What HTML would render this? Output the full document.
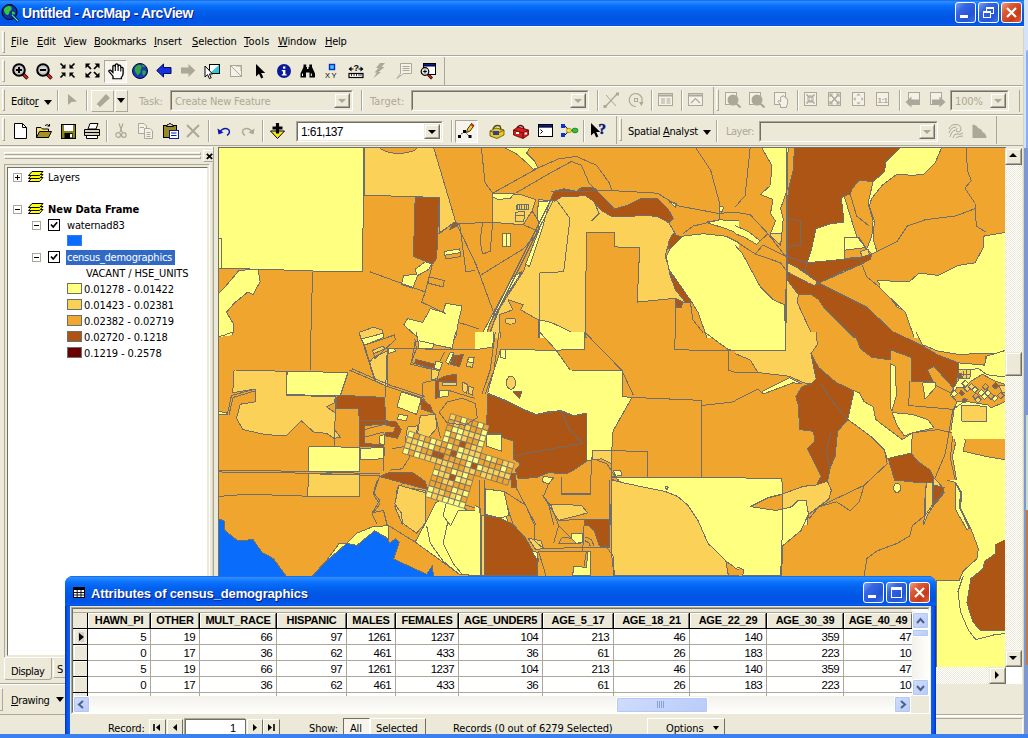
<!DOCTYPE html>
<html><head><meta charset="utf-8"><title>Untitled - ArcMap - ArcView</title>
<style>
*{box-sizing:border-box;margin:0;padding:0}
html,body{width:1028px;height:738px;overflow:hidden;background:#ece9d8;font-family:"DejaVu Sans Condensed","Liberation Sans",sans-serif;font-size:11px;color:#000}
body{position:relative}
.abs,.a{position:absolute}
svg{position:absolute;overflow:visible}
#title{left:0;top:0;width:1024px;height:26px;background:linear-gradient(#0a5fe8 0,#2f8cff 5%,#1c82ff 12%,#0a6ffc 22%,#0262ee 40%,#0058e6 60%,#0054e3 78%,#0055eb 90%,#0560f0 96%,#0348c8 100%)}
.tt{color:#fff;font-family:"Liberation Sans",sans-serif;font-weight:bold;font-size:13px;text-shadow:1px 1px 0 #0a1883;white-space:nowrap}
.wb{position:absolute;width:21px;height:21px;border:1px solid #fff;border-radius:3px;background:linear-gradient(135deg,#7ea0f4 0,#3566e4 30%,#2454d8 70%,#3a6fe8 100%)}
.wb.x{background:linear-gradient(135deg,#f0a088 0,#dc5a36 30%,#c83a18 70%,#e0603c 100%)}
.m{position:absolute;white-space:nowrap;font-size:11px;letter-spacing:-.15px}
.hl{position:absolute;height:1px}
.vl{position:absolute;width:1px}
.sep{position:absolute;width:2px;border-left:1px solid #aca899;border-right:1px solid #fff}
.grip{position:absolute;width:3px;border-left:1px solid #fff;border-top:1px solid #fff;border-right:1px solid #aca899;border-bottom:1px solid #aca899}
.combo{position:absolute;border:1px solid #aca899;border-right-color:#fff;border-bottom-color:#fff}
.combo:before{content:"";position:absolute;left:0;top:0;right:0;bottom:0;border:1px solid #716f64;border-right-color:#ece9d8;border-bottom-color:#ece9d8}
.dd{position:absolute;right:2px;top:2px;width:16px;bottom:2px;background:#ece9d8;border:1px solid #ece9d8;border-right-color:#716f64;border-bottom-color:#716f64}
.dd:before{content:"";position:absolute;left:0;top:0;right:0;bottom:0;border:1px solid #fff;border-right-color:#aca899;border-bottom-color:#aca899}
.dd:after{content:"";position:absolute;left:3px;top:5px;border:4px solid transparent;border-top-color:#000;border-bottom:0}
.dd.g:after{border-top-color:#aca899}
.dis{color:#aca899}
.tri{position:absolute;width:0;height:0;border:4.5px solid transparent;border-top:5px solid #000;border-bottom:0}
.sunk{position:absolute;border:1px solid #aca899;border-right-color:#fff;border-bottom-color:#fff}
</style></head><body>
<div id="title" class="a">
<svg style="left:1px;top:3px" width="20" height="20" viewBox="0 0 20 20" ><circle cx="8.5" cy="9" r="7.5" fill="#1030a0" stroke="#000"/><path d="M3 6 Q6 1.5 10 3.5 Q12 6.5 8.5 8.5 Q8 13 5 11.5 Q2.5 9 3 6Z" fill="#30c83c"/><path d="M11 8.5 Q14 8 14 10.5 Q12.5 13.5 11 12Z" fill="#30c83c"/><path d="M11 12 L17 18" stroke="#000" stroke-width="2.6"/><path d="M11 12 L17 18" stroke="#40e0f8" stroke-width="1.3"/></svg>
<div class="a tt" style="left:22px;top:5px;font-size:14px;letter-spacing:-.42px">Untitled - ArcMap - ArcView</div>
<div class="wb" style="left:955px;top:2px"><div class="a" style="left:4px;top:12px;width:8px;height:3px;background:#fff"></div></div>
<div class="wb" style="left:978px;top:2px"><div class="a" style="left:7px;top:4px;width:8px;height:7px;border:1px solid #fff;border-top-width:2px"></div><div class="a" style="left:4px;top:8px;width:8px;height:7px;border:1px solid #fff;border-top-width:2px;background:#2c5ce0"></div></div>
<div class="wb x" style="left:1001px;top:2px"><svg style="left:0;top:0" width="19" height="19" viewBox="0 0 19 19"><path d="M5 5 L14 14 M14 5 L5 14" stroke="#fff" stroke-width="2.2"/></svg></div>
</div>
<div class="hl" style="left:0;top:26px;width:1024px;background:#fff"></div>
<div class="grip" style="left:2px;top:31px;height:22px"></div>
<div class="m" style="left:11px;top:35px;letter-spacing:0.3px"><u>F</u>ile</div>
<div class="m" style="left:37px;top:35px;letter-spacing:-0.1px"><u>E</u>dit</div>
<div class="m" style="left:64px;top:35px;letter-spacing:-0.24px"><u>V</u>iew</div>
<div class="m" style="left:94px;top:35px;letter-spacing:-0.37px"><u>B</u>ookmarks</div>
<div class="m" style="left:154px;top:35px;letter-spacing:-0.1px"><u>I</u>nsert</div>
<div class="m" style="left:192px;top:35px;letter-spacing:-0.1px"><u>S</u>election</div>
<div class="m" style="left:244px;top:35px;letter-spacing:0.3px"><u>T</u>ools</div>
<div class="m" style="left:278px;top:35px;letter-spacing:-0.1px"><u>W</u>indow</div>
<div class="m" style="left:325px;top:35px;letter-spacing:-0.25px"><u>H</u>elp</div>
<div class="hl" style="left:0;top:55px;width:1028px;background:#aca899"></div>
<div class="hl" style="left:0;top:56px;width:1028px;background:#fff"></div>
<div class="vl" style="left:1024px;top:57px;height:90px;background:#aca899"></div>
<div class="grip" style="left:2px;top:60px;height:22px"></div>
<div class="hl" style="left:0;top:85px;width:444px;background:#aca899"></div>
<div class="vl" style="left:444px;top:57px;height:29px;background:#aca899"></div>
<div class="hl" style="left:445px;top:85px;width:579px;background:#aca899"></div>
<div class="hl" style="left:0;top:86px;width:1024px;background:#fff"></div>
<svg style="left:12px;top:63px" width="16" height="16" viewBox="0 0 16 16" ><circle cx="7" cy="7" r="5.8" fill="#c0c0c0" stroke="#000" stroke-width="2"/><circle cx="7" cy="7" r="3.2" fill="#d8d8d8"/><path d="M4 7 H10" stroke="#000" stroke-width="2"/><path d="M7 4 V10" stroke="#000" stroke-width="2"/><path d="M11 11 L15.5 15.5" stroke="#000" stroke-width="3.4"/><path d="M11.8 11.8 L15.6 15.6" stroke="#e02020" stroke-width="2"/></svg>
<svg style="left:36px;top:63px" width="16" height="16" viewBox="0 0 16 16" ><circle cx="7" cy="7" r="5.8" fill="#c0c0c0" stroke="#000" stroke-width="2"/><circle cx="7" cy="7" r="3.2" fill="#d8d8d8"/><path d="M4 7 H10" stroke="#000" stroke-width="2"/><path d="M11 11 L15.5 15.5" stroke="#000" stroke-width="3.4"/><path d="M11.8 11.8 L15.6 15.6" stroke="#e02020" stroke-width="2"/></svg>
<svg style="left:60px;top:63px" width="15" height="15" viewBox="0 0 15 15" ><path d="M4.5 4.5 L0.5 0.5" stroke="#000" stroke-width="1.7"/><path d="M5.5 5.5 L1.0 5.5 L5.5 1.0 Z" fill="#000"/><path d="M10.5 4.5 L14.5 0.5" stroke="#000" stroke-width="1.7"/><path d="M9.5 5.5 L14.0 5.5 L9.5 1.0 Z" fill="#000"/><path d="M4.5 10.5 L0.5 14.5" stroke="#000" stroke-width="1.7"/><path d="M5.5 9.5 L1.0 9.5 L5.5 14.0 Z" fill="#000"/><path d="M10.5 10.5 L14.5 14.5" stroke="#000" stroke-width="1.7"/><path d="M9.5 9.5 L14.0 9.5 L9.5 14.0 Z" fill="#000"/></svg>
<svg style="left:85px;top:63px" width="15" height="15" viewBox="0 0 15 15" ><path d="M1.5 1.5 L6.0 6.0" stroke="#000" stroke-width="1.7"/><path d="M0.5 0.5 L5.5 0.5 L0.5 5.5 Z" fill="#000"/><path d="M13.5 1.5 L9.0 6.0" stroke="#000" stroke-width="1.7"/><path d="M14.5 0.5 L9.5 0.5 L14.5 5.5 Z" fill="#000"/><path d="M1.5 13.5 L6.0 9.0" stroke="#000" stroke-width="1.7"/><path d="M0.5 14.5 L5.5 14.5 L0.5 9.5 Z" fill="#000"/><path d="M13.5 13.5 L9.0 9.0" stroke="#000" stroke-width="1.7"/><path d="M14.5 14.5 L9.5 14.5 L14.5 9.5 Z" fill="#000"/></svg>
<div class="a" style="left:104px;top:60px;width:23px;height:23px;border:1px solid #aca899;border-right-color:#fff;border-bottom-color:#fff;background:#f6f4ec"></div>
<svg style="left:108px;top:63px" width="16" height="16" viewBox="0 0 16 16" ><g transform="translate(-0.5,0) scale(1.22,1.05)"><path d="M4.5 15 L4.5 12.5 L1.2 8.2 Q0.8 6.6 2.4 6.8 L4.4 9 L4.4 3 Q5.3 1.6 6.3 3 L6.5 1.6 Q7.6 0.2 8.6 1.6 L8.8 2.6 Q9.9 1.4 10.8 2.8 L11 4.4 Q12.2 3.6 12.8 5 L12.8 10 Q12.6 12.5 11.4 13.5 L11.4 15 Z" fill="#fff" stroke="#000" stroke-width="1.1"/><path d="M6.4 3 V7.5 M8.7 2.6 V7.5 M10.9 4.4 V8" stroke="#000" stroke-width=".9"/></g></svg>
<svg style="left:132px;top:63px" width="16" height="16" viewBox="0 0 16 16" ><circle cx="8" cy="8" r="7.5" fill="#1838b8" stroke="#000830" stroke-width="1"/><path d="M3 4.5 Q5.5 1 8.5 2 Q11 4.5 8.5 6.5 Q9.5 9 7 11 Q5.5 13.5 4.5 10.5 Q2 8 3 4.5Z" fill="#2ea83a"/><path d="M10.5 7.5 Q13.5 6.5 14 9 Q13 12.5 11 12.5 Q9.8 10 10.5 7.5Z" fill="#2ea83a"/><path d="M9.5 1.5 Q12 1.5 13 3.5 Q11.5 4.5 10.5 3.5Z" fill="#2ea83a"/></svg>
<svg style="left:156px;top:63px" width="16" height="16" viewBox="0 0 16 16" ><path d="M0.7 7.5 L7.5 1 L7.5 4.5 L15 4.5 L15 10.5 L7.5 10.5 L7.5 14 Z" fill="#1430e0" stroke="#000860" stroke-width="1"/></svg>
<svg style="left:180px;top:63px" width="16" height="16" viewBox="0 0 16 16" ><path d="M15.3 7.5 L8.5 1 L8.5 4.5 L1 4.5 L1 10.5 L8.5 10.5 L8.5 14 Z" fill="#aca899"/></svg>
<svg style="left:204px;top:63px" width="17" height="17" viewBox="0 0 17 17" ><rect x="5.5" y="1.5" width="10" height="9" fill="#fff" stroke="#000"/><path d="M6 10 L15 2 L15 10Z" fill="#30c8d8"/><path d="M1 3 L1 14 L3.6 11.6 L5.4 15.6 L7.2 14.8 L5.4 11 L8.6 11 Z" fill="#fff" stroke="#000" stroke-width="1"/></svg>
<svg style="left:230px;top:65px" width="12" height="12" viewBox="0 0 12 12" ><rect x="0.5" y="0.5" width="11" height="11" fill="#f4f2e8" stroke="#aca899"/><path d="M1 1 L11 11 M6 1 L11 1 L11 6" stroke="#aca899" fill="none"/></svg>
<svg style="left:255px;top:64px" width="11" height="15" viewBox="0 0 11 15" ><path d="M1 0 L1 12.5 L4 9.8 L6.2 14.6 L8.3 13.6 L6.2 9 L10.2 9 Z" fill="#000"/></svg>
<svg style="left:277px;top:64px" width="14" height="14" viewBox="0 0 14 14" ><circle cx="7" cy="7" r="7" fill="#0a1a9a"/><rect x="6" y="2.5" width="2.4" height="2.2" fill="#fff"/><path d="M4.8 6 H8.4 V10.3 H9.6 V11.6 H4.8 V10.3 H6 V7.3 H4.8Z" fill="#fff"/></svg>
<svg style="left:300px;top:64px" width="16" height="14" viewBox="0 0 16 14" ><path d="M3.5 0.5 H6.2 V3 H7 V5 H8.5 V3 H9.3 V0.5 H12 L12 3 L15 9.5 V13.5 H9.5 V8.5 H6 V13.5 H0.5 V9.5 L3.5 3 Z" fill="#000"/><path d="M2.5 9.5 V12 M11.3 9.5 V12" stroke="#fff" stroke-width="1"/></svg>
<svg style="left:325px;top:62px" width="16" height="16" viewBox="0 0 16 16" ><rect x="4.5" y="2.5" width="5" height="5" fill="#30d0f8" stroke="#1028c0" stroke-width="1.4"/><text x="0" y="16" font-family="Liberation Sans,sans-serif" font-size="7.5" fill="#000" letter-spacing="1.6">XY</text></svg>
<svg style="left:348px;top:62px" width="16" height="16" viewBox="0 0 16 16" ><rect x="1" y="11.5" width="14" height="4" fill="#fff" stroke="#000" stroke-width="1.2"/><path d="M3.5 12 V14 M6 12 V14 M8.5 12 V14 M11 12 V14 M13 12 V14" stroke="#000" stroke-width=".8"/><path d="M0.5 7 L3.5 4.5 V9.5Z M15.5 7 L12.5 4.5 V9.5Z" fill="#000"/><path d="M3 7 H5.5 M10.5 7 H13" stroke="#000" stroke-width="1.2"/><text x="5.6" y="9" font-family="Liberation Sans,sans-serif" font-size="9" font-weight="bold" fill="#000">?</text></svg>
<svg style="left:373px;top:63px" width="13" height="15" viewBox="0 0 13 15" ><path d="M7 0 L12 0 L8.5 4 L11.5 4 L5.5 9 L8 9 L0.5 15 L3.8 9.5 L1.5 9.5 L5.5 5 L3 5 Z" fill="#aca899"/></svg>
<svg style="left:396px;top:63px" width="16" height="16" viewBox="0 0 16 16" ><path d="M4.5 0.5 H15.5 V10.5 H7.5 L0.8 15.5 L4.5 10.5 Z" fill="#f4f2e8" stroke="#aca899"/><path d="M6.5 3.5 H13.5 M6.5 5.5 H13.5 M6.5 7.5 H13.5" stroke="#aca899"/></svg>
<svg style="left:420px;top:63px" width="16" height="16" viewBox="0 0 16 16" ><rect x="3.5" y="0.5" width="12" height="11" fill="#fff" stroke="#000"/><rect x="3.5" y="0.5" width="12" height="2.5" fill="#0a1a9a" stroke="#000"/><circle cx="5" cy="8.5" r="3.8" fill="#e0e0e0" stroke="#000" stroke-width="1.2"/><path d="M3.2 8.5 H6.8 M5 6.7 V10.3" stroke="#000"/><path d="M8 11.5 L12 15.5" stroke="#000" stroke-width="2.6"/><path d="M8.5 12 L11.8 15.3" stroke="#e02020" stroke-width="1.4"/></svg>
<div class="grip" style="left:2px;top:89px;height:22px"></div>
<div class="hl" style="left:0;top:114px;width:1024px;background:#aca899"></div>
<div class="hl" style="left:0;top:115px;width:1024px;background:#fff"></div>
<div class="m" style="left:11px;top:95px;letter-spacing:-.3px">Edito<u>r</u></div>
<div class="tri" style="left:44px;top:100px"></div>
<div class="sep" style="left:57px;top:90px;height:21px"></div>
<svg style="left:67px;top:94px" width="11" height="12" viewBox="0 0 11 12" ><path d="M1 0 L1 11 L4.5 8 L10 7.4 Z" fill="#aca899"/></svg>
<div class="sep" style="left:86px;top:90px;height:21px"></div>
<div class="a" style="left:91px;top:90px;width:23px;height:22px;border:1px solid #fff;border-right-color:#aca899;border-bottom-color:#aca899"></div>
<svg style="left:95px;top:93px" width="16" height="16" viewBox="0 0 16 16" ><path d="M1 15 L2.2 10.5 L11 1 L15 5 L5.5 13.8 Z" fill="#aca899"/><path d="M1 15 L2 11.5 L4.5 14Z" fill="#fff"/></svg>
<div class="a" style="left:115px;top:90px;width:13px;height:22px;border:1px solid #fff;border-right-color:#aca899;border-bottom-color:#aca899"></div>
<div class="tri" style="left:117px;top:98px"></div>
<div class="m dis" style="left:139px;top:95px">Task:</div>
<div class="combo" style="left:170px;top:90px;width:183px;height:21px"><div class="m dis" style="left:4px;top:4px">Create New Feature</div><div class="dd g"></div></div>
<div class="sep" style="left:361px;top:90px;height:21px"></div>
<div class="m dis" style="left:370px;top:95px;letter-spacing:.1px">Target:</div>
<div class="combo" style="left:411px;top:90px;width:178px;height:21px"><div class="dd g"></div></div>
<div class="sep" style="left:597px;top:90px;height:21px"></div>
<svg style="left:603px;top:92px" width="16" height="16" viewBox="0 0 16 16" ><path d="M2 15 L14 2" stroke="#aca899" stroke-width="1.3"/><path d="M3 3 L13 14" stroke="#aca899" stroke-width="1"/><rect x="0.5" y="13" width="3" height="3" fill="#aca899"/><rect x="13" y="0.5" width="3" height="3" fill="#aca899"/></svg>
<svg style="left:628px;top:92px" width="16" height="16" viewBox="0 0 16 16" ><path d="M13.5 11 A6.5 6.5 0 1 0 8 14.5" fill="none" stroke="#aca899" stroke-width="1.2"/><path d="M11 10 L15.5 10 L13.3 14Z" fill="#aca899"/><rect x="6.5" y="6.5" width="3" height="3" fill="none" stroke="#aca899"/></svg>
<div class="sep" style="left:651px;top:90px;height:21px"></div>
<svg style="left:658px;top:93px" width="15" height="13" viewBox="0 0 15 13" ><rect x="0.5" y="0.5" width="14" height="12" fill="#f4f2e8" stroke="#aca899"/><path d="M0.5 2.5 H14.5" stroke="#aca899" stroke-width="2"/><path d="M3 6 H7 M8.5 6 H12.5 M3 8 H7 M8.5 8 H12.5 M3 10 H7 M8.5 10 H12.5" stroke="#aca899"/></svg>
<div class="sep" style="left:681px;top:90px;height:21px"></div>
<svg style="left:688px;top:93px" width="15" height="13" viewBox="0 0 15 13" ><rect x="0.5" y="0.5" width="14" height="12" fill="#f4f2e8" stroke="#aca899"/><path d="M0.5 2.5 H14.5" stroke="#aca899" stroke-width="2"/><path d="M3 10 L7.5 5.5 L12 10" stroke="#aca899" fill="none" stroke-width="1.2"/></svg>
<div class="vl" style="left:713px;top:87px;height:27px;background:#aca899"></div>
<div class="grip" style="left:716px;top:89px;height:22px"></div>
<svg style="left:725px;top:92px" width="16" height="16" viewBox="0 0 16 16" ><rect x="0.5" y="0.5" width="11" height="12" fill="#f4f2e8" stroke="#aca899"/><circle cx="8" cy="8" r="5.5" fill="#aca899"/><path d="M12 12 L15.5 15.5" stroke="#aca899" stroke-width="2.2"/></svg>
<svg style="left:749px;top:92px" width="16" height="16" viewBox="0 0 16 16" ><rect x="0.5" y="0.5" width="11" height="12" fill="#f4f2e8" stroke="#aca899"/><circle cx="8" cy="8" r="5.5" fill="#aca899"/><path d="M12 12 L15.5 15.5" stroke="#aca899" stroke-width="2.2"/></svg>
<svg style="left:774px;top:92px" width="16" height="16" viewBox="0 0 16 16" ><rect x="0.5" y="0.5" width="11" height="12" fill="#f4f2e8" stroke="#aca899"/><path d="M6.5 15.5 L6.5 13 L4 9.5 Q4 8 5.4 8.5 L6.6 10 L6.6 5 Q7.4 4 8.2 5 L8.4 4 Q9.3 3 10 4 L10.2 5 Q11.2 4 11.8 5 L12 6.5 Q13 6 13.6 7 L13.6 11 Q13.4 13 12.4 14 L12.4 15.5 Z" fill="#f4f2e8" stroke="#aca899" stroke-width="1"/></svg>
<div class="sep" style="left:797px;top:90px;height:21px"></div>
<svg style="left:804px;top:92px" width="13" height="14" viewBox="0 0 13 14" ><rect x="0.5" y="0.5" width="12" height="13" fill="#f4f2e8" stroke="#aca899"/><path d="M2.5 2.5 L5.5 5.5 M10.5 2.5 L7.5 5.5 M2.5 11.5 L5.5 8.5 M10.5 11.5 L7.5 8.5" stroke="#aca899" stroke-width="1.6"/><path d="M3 6 H6 V3 M10 6 H7 V3 M3 8 H6 V11 M10 8 H7 V11" stroke="#aca899" fill="none"/></svg>
<svg style="left:828px;top:92px" width="13" height="14" viewBox="0 0 13 14" ><rect x="0.5" y="0.5" width="12" height="13" fill="#f4f2e8" stroke="#aca899"/><path d="M2.5 2.5 L10.5 11.5 M10.5 2.5 L2.5 11.5" stroke="#aca899" stroke-width="1.4"/><path d="M2 5 V2 H5 M8 2 H11 V5 M2 9 V12 H5 M8 12 H11 V9" stroke="#aca899" fill="none" stroke-width="1.2"/></svg>
<svg style="left:852px;top:92px" width="13" height="14" viewBox="0 0 13 14" ><rect x="0.5" y="0.5" width="12" height="13" fill="#f4f2e8" stroke="#aca899"/><path d="M6.5 1.5 L4.5 3.5 H8.5Z M6.5 12.5 L4.5 10.5 H8.5Z M1.5 7 L3.5 5 V9Z M11.5 7 L9.5 5 V9Z" fill="#aca899"/></svg>
<svg style="left:876px;top:92px" width="13" height="14" viewBox="0 0 13 14" ><rect x="0.5" y="0.5" width="12" height="13" fill="#f4f2e8" stroke="#aca899"/><text x="1.6" y="10.5" font-family="Liberation Sans,sans-serif" font-size="8" font-weight="bold" fill="#aca899" letter-spacing="-0.6">1:1</text></svg>
<div class="sep" style="left:899px;top:90px;height:21px"></div>
<svg style="left:905px;top:92px" width="16" height="16" viewBox="0 0 16 16" ><rect x="3.5" y="0.5" width="11" height="12" fill="#f4f2e8" stroke="#aca899"/><path d="M0.5 10 L6.5 4.5 L6.5 7.5 L14 7.5 L14 12.5 L6.5 12.5 L6.5 15.5 Z" fill="#aca899"/></svg>
<svg style="left:930px;top:92px" width="16" height="16" viewBox="0 0 16 16" ><rect x="0.5" y="0.5" width="11" height="12" fill="#f4f2e8" stroke="#aca899"/><path d="M15.5 10 L9.5 4.5 L9.5 7.5 L2 7.5 L2 12.5 L9.5 12.5 L9.5 15.5 Z" fill="#aca899"/></svg>
<div class="combo" style="left:950px;top:90px;width:59px;height:21px"><div class="m dis" style="left:4px;top:4px">100%</div><div class="dd g"></div></div>
<div class="vl" style="left:1019px;top:90px;height:22px;background:#aca899"></div>
<div class="grip" style="left:2px;top:118px;height:23px"></div>
<svg style="left:14px;top:123px" width="13" height="16" viewBox="0 0 13 16" ><path d="M0.5 0.5 H8.5 L12.5 4.5 V15.5 H0.5Z" fill="#fff" stroke="#000"/><path d="M8.5 0.5 V4.5 H12.5" fill="none" stroke="#000"/></svg>
<svg style="left:36px;top:123px" width="16" height="16" viewBox="0 0 16 16" ><path d="M0.5 4.5 H5 L6.5 6 H12.5 V14.5 H0.5Z" fill="#f8e060" stroke="#000"/><path d="M0.5 14.5 L3.5 8.5 H15.5 L12.5 14.5Z" fill="#a89020" stroke="#000"/><path d="M9 2.5 Q11.5 0.5 13.5 3 M13.5 3 L11.5 3.2 M13.5 3 L13.6 1" stroke="#000" fill="none"/></svg>
<svg style="left:61px;top:124px" width="15" height="15" viewBox="0 0 15 15" ><rect x="0.5" y="0.5" width="14" height="14" fill="#8a8020" stroke="#000"/><rect x="3" y="1" width="9" height="6" fill="#fff"/><rect x="3.5" y="9" width="8" height="5.5" fill="#000"/><rect x="9" y="10" width="2" height="3.5" fill="#fff"/></svg>
<svg style="left:84px;top:123px" width="16" height="16" viewBox="0 0 16 16" ><path d="M4 6 L6 0.5 H14 L12 6Z" fill="#fff" stroke="#000"/><path d="M0.5 6.5 H15.5 V12.5 H0.5Z" fill="#d8d4c0" stroke="#000"/><path d="M2.5 12.5 H13.5 V15.5 H2.5Z" fill="#fff" stroke="#000"/><path d="M0.5 9.5 H15.5" stroke="#000"/><rect x="11.5" y="10.5" width="2" height="1.4" fill="#e8d020"/></svg>
<div class="sep" style="left:106px;top:120px;height:22px"></div>
<svg style="left:115px;top:123px" width="12" height="16" viewBox="0 0 12 16" ><path d="M4 0.5 L7 9 M8 0.5 L5 9" stroke="#aca899" stroke-width="1.2" fill="none"/><circle cx="3.2" cy="12" r="2.3" fill="none" stroke="#aca899" stroke-width="1.2"/><circle cx="8.8" cy="12" r="2.3" fill="none" stroke="#aca899" stroke-width="1.2"/></svg>
<svg style="left:138px;top:123px" width="15" height="16" viewBox="0 0 15 16" ><path d="M0.5 0.5 H6 L8.5 3 V10.5 H0.5Z" fill="#f4f2e8" stroke="#aca899"/><path d="M6.5 5.5 H12 L14.5 8 V15.5 H6.5Z" fill="#f4f2e8" stroke="#aca899"/><path d="M8.5 9.5 H12.5 M8.5 11.5 H12.5 M8.5 13.5 H12.5 M2 4.5 H6" stroke="#aca899"/></svg>
<svg style="left:163px;top:123px" width="16" height="16" viewBox="0 0 16 16" ><rect x="0.5" y="2.5" width="13" height="12" fill="#9a8a20" stroke="#000"/><path d="M3.5 3.5 L4.5 1.5 H5.5 Q7 -1 8.5 1.5 H9.5 L10.5 3.5Z" fill="#d8d4c0" stroke="#000"/><rect x="6.5" y="7.5" width="9" height="8" fill="#fff" stroke="#0a1a9a"/><path d="M8 10 H13.5 M8 12.5 H13.5" stroke="#0a1a9a"/></svg>
<svg style="left:186px;top:124px" width="14" height="14" viewBox="0 0 14 14" ><path d="M1 1 L13 13 M13 1 L1 13" stroke="#aca899" stroke-width="2"/></svg>
<div class="sep" style="left:208px;top:120px;height:22px"></div>
<svg style="left:217px;top:126px" width="14" height="11" viewBox="0 0 14 11" ><path d="M2.5 6 Q7 0.5 11.5 3.5 Q14 6.5 10 9.5" fill="none" stroke="#0a1ab0" stroke-width="1.4"/><path d="M0.5 2.5 L1.5 8.5 L6.5 6.5Z" fill="#0a1ab0"/></svg>
<svg style="left:241px;top:126px" width="14" height="11" viewBox="0 0 14 11" ><path d="M11.5 6 Q7 0.5 2.5 3.5 Q0 6.5 4 9.5" fill="none" stroke="#aca899" stroke-width="1.4"/><path d="M13.5 2.5 L12.5 8.5 L7.5 6.5Z" fill="#aca899"/></svg>
<div class="sep" style="left:262px;top:120px;height:22px"></div>
<svg style="left:270px;top:123px" width="15" height="16" viewBox="0 0 15 16" ><path d="M0.5 8 L7.5 15.5 L14.5 8Z" fill="#f8e820" stroke="#000"/><path d="M7.5 0 V10.5 M2.5 5 H12.5" stroke="#000" stroke-width="3.2"/></svg>
<div class="combo" style="left:296px;top:121px;width:147px;height:21px;background:#fff"><div class="m" style="left:4px;top:3px;font-family:'Liberation Sans',sans-serif;font-size:12px;letter-spacing:-.6px">1:61,137</div><div class="dd"></div></div>
<div class="sep" style="left:451px;top:120px;height:22px"></div>
<div class="a" style="left:455px;top:120px;width:23px;height:23px;border:1px solid #aca899;border-right-color:#fff;border-bottom-color:#fff;background:#f6f4ec"></div>
<svg style="left:458px;top:123px" width="16" height="16" viewBox="0 0 16 16" ><path d="M1.5 13.5 L6 8 L11.5 13.5" fill="none" stroke="#000" stroke-dasharray="1.5 1.5"/><rect x="0" y="12" width="3" height="3" fill="#000"/><rect x="5" y="7" width="3" height="3" fill="#000"/><rect x="10.5" y="12" width="3" height="3" fill="#000"/><path d="M8.5 9.5 L9.5 6 L13.5 0.5 L16 2.5 L12 8Z" fill="#f8d020" stroke="#000" stroke-width=".8"/><path d="M13.5 0.5 L16 2.5 L15 4 L12.5 2Z" fill="#e02020"/></svg>
<svg style="left:489px;top:123px" width="16" height="16" viewBox="0 0 16 16" ><path d="M1 8 L7 5 L15 7 V12 L8 15.5 L1 13Z" fill="#e8c820" stroke="#5a4a00" stroke-width=".8"/><path d="M4 6 Q6 1 11 3 L12 6.5" fill="none" stroke="#5a4a00" stroke-width="1.4"/><rect x="4" y="8" width="6" height="4" fill="#2040c0"/><path d="M1 8 L8 10.5 L15 7" fill="none" stroke="#5a4a00" stroke-width=".8"/></svg>
<svg style="left:513px;top:124px" width="16" height="15" viewBox="0 0 16 15" ><path d="M0.5 6 L5 3 L15.5 6 V11 L10 14.5 L0.5 11Z" fill="#d02020" stroke="#600000" stroke-width=".8"/><path d="M4 4 Q6 0 10 2.5 L11 5" fill="none" stroke="#600000" stroke-width="1.4"/><path d="M0.5 6 L10 9 L15.5 6 M10 9 V14.5" fill="none" stroke="#600000" stroke-width=".8"/><rect x="3" y="8" width="3" height="2" fill="#fff"/><rect x="11.5" y="8.5" width="2.5" height="2" fill="#fff"/></svg>
<svg style="left:538px;top:124px" width="15" height="13" viewBox="0 0 15 13" ><rect x="0.5" y="0.5" width="14" height="12" fill="#fff" stroke="#000"/><rect x="0.5" y="0.5" width="14" height="2.6" fill="#0a1a9a" stroke="#000"/><path d="M2.5 5.5 L4.5 7.5 L2.5 9.5" fill="none" stroke="#000"/></svg>
<svg style="left:561px;top:123px" width="17" height="15" viewBox="0 0 17 15" ><rect x="0" y="1" width="4" height="4" fill="#1030d0"/><rect x="0" y="10" width="4" height="4" fill="#1030d0"/><path d="M4 3 L8 7.5 L4 12 M8 7.5 H12" stroke="#000" fill="none"/><ellipse cx="8" cy="7.5" rx="2.5" ry="2.2" fill="#f8e020" stroke="#807000" stroke-width=".6"/><ellipse cx="14" cy="7.5" rx="3" ry="2.4" fill="#30c040" stroke="#106010" stroke-width=".6"/></svg>
<div class="sep" style="left:583px;top:120px;height:22px"></div>
<svg style="left:590px;top:123px" width="17" height="16" viewBox="0 0 17 16" ><path d="M1 0 L1 12.5 L4 9.8 L6.2 14.6 L8.3 13.6 L6.2 9 L10.2 9 Z" fill="#000"/><text x="8.5" y="11" font-family="Liberation Serif,serif" font-size="15" font-weight="bold" fill="#0a1080" stroke="#0a1080" stroke-width=".5">?</text></svg>
<div class="vl" style="left:616px;top:116px;height:28px;background:#aca899"></div>
<div class="grip" style="left:619px;top:118px;height:23px"></div>
<div class="m" style="left:628px;top:125px;letter-spacing:-.27px">Spatial <u>A</u>nalyst</div>
<div class="tri" style="left:703px;top:130px"></div>
<div class="sep" style="left:716px;top:120px;height:22px"></div>
<div class="m dis" style="left:726px;top:125px;letter-spacing:-.5px">Layer:</div>
<div class="combo" style="left:759px;top:121px;width:179px;height:21px"><div class="dd g"></div></div>
<svg style="left:948px;top:123px" width="16" height="16" viewBox="0 0 16 16" ><path d="M1 6 Q3 1 8 1.5 Q13 2 13 6 Q13 9 10 9 Q8 9 8 7 Q8 5.5 9.5 5.5 M1 10 Q3 4 8 4 M2 14 Q4 7 7 7.5 M5 15 Q6 10 9 11 Q12 12 15 10 M8 15 Q10 13 15 13" fill="none" stroke="#aca899" stroke-width="1"/></svg>
<svg style="left:972px;top:124px" width="15" height="14" viewBox="0 0 15 14" ><path d="M0.5 14 V0.5 Q5 1 6 4 Q10 5 10.5 8 Q14 9 14.5 14Z" fill="#aca899"/></svg>
<div class="vl" style="left:996px;top:116px;height:28px;background:#aca899"></div>
<div class="hl" style="left:0;top:145px;width:1028px;background:#aca899"></div>
<div class="hl" style="left:0;top:147px;width:214px;background:#fff"></div>
<div class="a" style="left:4px;top:152px;width:197px;height:3px;border-top:1px solid #fff;border-left:1px solid #fff;border-bottom:1px solid #aca899;border-right:1px solid #aca899"></div>
<div class="a" style="left:4px;top:156px;width:197px;height:3px;border-top:1px solid #fff;border-left:1px solid #fff;border-bottom:1px solid #aca899;border-right:1px solid #aca899"></div>
<div class="a" style="left:203px;top:150px;width:12px;height:12px;border:1px solid #fff;border-right-color:#aca899;border-bottom-color:#aca899"></div>
<svg style="left:206px;top:153px" width="7" height="7" viewBox="0 0 7 7"><path d="M0.8 0.8 L6.2 5.8 M6.2 0.8 L0.8 5.8" stroke="#000" stroke-width="1.8"/></svg>
<div class="vl" style="left:213px;top:147px;height:538px;background:#aca899"></div>
<div class="vl" style="left:212px;top:163px;height:520px;background:#d8d4c4"></div>
<div class="a" style="left:4px;top:164px;width:206px;height:494px;border:1px solid #aca899;border-right-color:#fff;border-bottom-color:#fff;background:#ece9d8"></div>
<div class="a" style="left:7px;top:167px;width:201px;height:489px;border:1px solid #716f64;border-right-color:#ece9d8;border-bottom-color:#ece9d8;background:#fff"></div>
<div class="a" style="left:13px;top:173px;width:9px;height:9px;border:1px solid #aca899;background:#fff"></div><div class="a" style="left:15px;top:177px;width:5px;height:1px;background:#000"></div><div class="a" style="left:17px;top:175px;width:1px;height:5px;background:#000"></div>
<svg style="left:28px;top:170px" width="16" height="13" viewBox="0 0 16 13"><path d="M0.5 11.5 L4 7.5 H15 L11.5 11.5Z" fill="#ffff00" stroke="#000" stroke-width="1"/><path d="M0.5 8.5 L4 4.5 H15 L11.5 8.5Z" fill="#ffff00" stroke="#000" stroke-width="1"/><path d="M0.5 5.5 L4 1.5 H15 L11.5 5.5Z" fill="#ffff00" stroke="#000" stroke-width="1"/></svg>
<div class="m" style="left:48px;top:171px">Layers</div>
<div class="a" style="left:13px;top:205px;width:9px;height:9px;border:1px solid #aca899;background:#fff"></div><div class="a" style="left:15px;top:209px;width:5px;height:1px;background:#000"></div>
<svg style="left:28px;top:202px" width="16" height="13" viewBox="0 0 16 13"><path d="M0.5 11.5 L4 7.5 H15 L11.5 11.5Z" fill="#ffff00" stroke="#000" stroke-width="1"/><path d="M0.5 8.5 L4 4.5 H15 L11.5 8.5Z" fill="#ffff00" stroke="#000" stroke-width="1"/><path d="M0.5 5.5 L4 1.5 H15 L11.5 5.5Z" fill="#ffff00" stroke="#000" stroke-width="1"/></svg>
<div class="m" style="left:48px;top:203px;font-weight:bold;letter-spacing:-.05px">New Data Frame</div>
<div class="a" style="left:32px;top:221px;width:9px;height:9px;border:1px solid #aca899;background:#fff"></div><div class="a" style="left:34px;top:225px;width:5px;height:1px;background:#000"></div>
<div class="a" style="left:48px;top:219px;width:12px;height:12px;border:1px solid #000;background:#fff"></div><svg style="left:50px;top:221px" width="8" height="8" viewBox="0 0 8 8"><path d="M1 3.5 L3.2 6 L7.2 1.2" fill="none" stroke="#000" stroke-width="1.7"/></svg>
<div class="m" style="left:67px;top:219px">waternad83</div>
<div class="a" style="left:67px;top:235px;width:15px;height:11px;background:#0a6cff;border:1px solid #3080f0"></div>
<div class="a" style="left:32px;top:253px;width:9px;height:9px;border:1px solid #aca899;background:#fff"></div><div class="a" style="left:34px;top:257px;width:5px;height:1px;background:#000"></div>
<div class="a" style="left:48px;top:251px;width:12px;height:12px;border:1px solid #000;background:#fff"></div><svg style="left:50px;top:253px" width="8" height="8" viewBox="0 0 8 8"><path d="M1 3.5 L3.2 6 L7.2 1.2" fill="none" stroke="#000" stroke-width="1.7"/></svg>
<div class="a" style="left:66px;top:250px;width:109px;height:15px;background:#316ac5"></div>
<div class="m" style="left:67px;top:251px;color:#fff;letter-spacing:-.25px">census_demographics</div>
<div class="m" style="left:86px;top:267px;letter-spacing:-.1px">VACANT / HSE_UNITS</div>
<div class="a" style="left:67px;top:283px;width:15px;height:11px;background:#ffff80;border:1px solid #6e6e6e"></div>
<div class="m" style="left:84px;top:283px;letter-spacing:-.1px">0.01278 - 0.01422</div>
<div class="a" style="left:67px;top:299px;width:15px;height:11px;background:#fad155;border:1px solid #6e6e6e"></div>
<div class="m" style="left:84px;top:299px;letter-spacing:-.1px">0.01423 - 0.02381</div>
<div class="a" style="left:67px;top:315px;width:15px;height:11px;background:#f0a630;border:1px solid #6e6e6e"></div>
<div class="m" style="left:84px;top:315px;letter-spacing:-.1px">0.02382 - 0.02719</div>
<div class="a" style="left:67px;top:331px;width:15px;height:11px;background:#ad5315;border:1px solid #6e6e6e"></div>
<div class="m" style="left:84px;top:331px;letter-spacing:-.1px">0.02720 - 0.1218</div>
<div class="a" style="left:67px;top:347px;width:15px;height:11px;background:#6b0000;border:1px solid #6e6e6e"></div>
<div class="m" style="left:84px;top:347px;letter-spacing:-.1px">0.1219 - 0.2578</div>
<div class="a" style="left:4px;top:658px;width:48px;height:22px;border:1px solid #fff;border-top:0;border-right-color:#aca899;border-bottom-color:#aca899;border-radius:0 0 3px 3px"></div>
<div class="m" style="left:11px;top:665px;letter-spacing:-.43px">Display</div>
<div class="a" style="left:53px;top:660px;width:13px;height:18px;border-left:1px solid #fff;border-bottom:1px solid #aca899"></div>
<div class="m" style="left:57px;top:663px">S</div>
<div class="hl" style="left:0;top:683px;width:66px;background:#aca899"></div>
<div class="hl" style="left:0;top:684px;width:66px;background:#fff"></div>
<div class="grip" style="left:0px;top:688px;height:23px;border-left:0"></div>
<div class="m" style="left:11px;top:694px;letter-spacing:-.38px"><u>D</u>rawing</div>
<div class="tri" style="left:56px;top:697px"></div>
<div class="hl" style="left:0;top:714px;width:66px;background:#aca899"></div>
<div class="a" style="left:218px;top:147px;width:788px;height:521px;background:#716f64"></div>
<div class="a" style="left:214px;top:147px;width:4px;height:538px;background:#ece9d8"></div>
<div class="a" style="left:219px;top:148px;width:786px;height:519px;overflow:hidden"><svg style="left:0;top:0" width="786" height="519" viewBox="219 148 786 519"><rect x="219" y="148" width="786" height="519" fill="#f0a62e"/><g stroke="#6e6e6e" stroke-width="1" stroke-linejoin="round" shape-rendering="crispEdges"><polygon stroke="none" fill="#ffff80" points="215.0,145.0 364.0,145.0 362.5,271.7 336.6,271.0 312.6,271.0 260.6,269.2 215.0,268.4"/><path fill="none" d="M364.0 145.0L362.5 271.7L336.6 271.0L312.6 271.0L260.6 269.2L215.0 268.4"/><polygon stroke="none" fill="#fbd158" points="364.5,145.0 432.9,145.0 455.8,222.3 451.9,224.1 439.3,233.7 439.3,197.5 364.5,195.2"/><path fill="none" d="M432.9 145.0L455.8 222.3L451.9 224.1L439.3 233.7L439.3 197.5L364.5 195.2L364.5 145.0"/><ellipse fill="#f0a62e" cx="398.7" cy="146.3" rx="19.0" ry="7.1"/><polygon stroke="none" fill="#ad5515" points="415.2,197.5 439.3,197.5 436.7,257.8 432.9,264.1 413.4,256.5"/><path fill="none" d="M415.2 197.5L439.3 197.5L436.7 257.8L432.9 264.1L413.4 256.5L415.2 197.5"/><polygon stroke="none" fill="#ad5515" points="453.2,222.3 460.8,223.6 449.4,229.9"/><path fill="none" d="M453.2 222.3L460.8 223.6L449.4 229.9L453.2 222.3"/><polygon stroke="none" fill="#ffff80" points="239.1,270.4 258.1,269.2 260.1,281.8 253.0,294.5 247.9,292.0 234.0,303.4 226.4,312.3 234.0,324.9 232.7,335.1 215.0,337.6 215.0,297.1 225.1,286.9"/><path fill="none" d="M239.1 270.4L258.1 269.2L260.1 281.8L253.0 294.5L247.9 292.0L234.0 303.4L226.4 312.3L234.0 324.9L232.7 335.1M215.0 297.1L225.1 286.9L239.1 270.4"/><polygon stroke="none" fill="#ffff80" points="403.8,275.5 416.5,274.2 415.2,269.2 425.3,261.6 431.7,264.1 429.1,269.2 417.7,275.5 412.7,288.2 401.3,284.4"/><path fill="none" d="M403.8 275.5L416.5 274.2L415.2 269.2L425.3 261.6L431.7 264.1L429.1 269.2L417.7 275.5L412.7 288.2L401.3 284.4L403.8 275.5"/><polygon stroke="none" fill="#ffff80" points="445.6,303.4 462.1,305.9 458.3,322.4 455.8,337.6 417.7,337.6 403.8,324.9 407.6,318.6 422.8,322.4 430.4,308.5 443.1,312.3"/><path fill="none" d="M445.6 303.4L462.1 305.9L458.3 322.4L455.8 337.6M417.7 337.6L403.8 324.9L407.6 318.6L422.8 322.4L430.4 308.5L443.1 312.3L445.6 303.4"/><polyline fill="none" points="458.3,322.4 478.6,328.7"/><polyline fill="none" points="312.6,271.7 310.8,337.6"/><polyline fill="none" points="369.6,271.7 425.3,292.0 432.4,264.6"/><polyline fill="none" points="455.8,222.3 473.5,259.0 478.6,271.7"/><polyline fill="none" points="438.0,233.7 451.9,224.1 475.0,223.6"/><polyline fill="none" points="444.3,251.4 459.6,248.9 460.8,256.5 445.6,259.0 444.3,251.4"/><polygon stroke="none" fill="#ffff80" points="444.3,251.4 459.6,248.9 460.3,252.7 444.9,255.2"/><path fill="none" d="M444.3 251.4L459.6 248.9L460.3 252.7L444.9 255.2L444.3 251.4"/><polyline fill="none" points="429.1,276.8 444.3,280.6 443.1,286.9 427.9,283.1 429.1,276.8"/><polyline fill="none" points="459.6,223.6 465.9,271.7 475.0,270.4"/><polyline fill="none" points="425.3,292.0 421.5,302.1 445.6,313.5"/><polyline fill="none" points="215.0,238.8 221.3,238.8 221.3,267.9"/><polygon stroke="none" fill="#fbd158" points="235.3,370.0 286.0,371.3 286.0,395.4 335.4,396.6 334.1,403.0 326.5,406.8 335.4,413.1 334.6,429.6 340.4,437.2 334.1,438.4 326.5,433.4 313.8,432.1 301.2,420.7 286.0,435.9 265.7,434.6 242.9,429.6 236.5,418.2 240.3,404.2 255.5,401.7 255.5,389.0 232.7,392.8 234.0,371.3"/><path fill="none" d="M235.3 370.0L286.0 371.3L286.0 395.4L335.4 396.6L334.1 403.0L326.5 406.8L335.4 413.1L334.6 429.6L340.4 437.2L334.1 438.4L326.5 433.4L313.8 432.1L301.2 420.7L286.0 435.9L265.7 434.6L242.9 429.6L236.5 418.2L240.3 404.2L255.5 401.7L255.5 389.0L232.7 392.8L234.0 371.3L235.3 370.0"/><polygon stroke="none" fill="#ffff80" points="287.2,371.3 348.0,372.5 340.4,395.4 286.0,394.8"/><path fill="none" d="M287.2 371.3L348.0 372.5L340.4 395.4L286.0 394.8L287.2 371.3"/><polygon stroke="none" fill="#ffff80" points="215.0,411.1 226.4,412.6 227.7,414.6 215.0,414.4"/><path fill="none" d="M215.0 411.1L226.4 412.6L227.7 414.6L215.0 414.4"/><polyline fill="none" points="227.7,412.6 231.5,395.4 255.5,389.0"/><polyline fill="none" points="228.9,415.1 233.2,397.4 255.5,390.8"/><polygon stroke="none" fill="#ad5515" points="336.6,396.6 341.7,395.4 384.8,397.4 385.3,420.7 359.5,420.7 358.2,408.0 336.1,408.0"/><path fill="none" d="M336.6 396.6L341.7 395.4L384.8 397.4L385.3 420.7L359.5 420.7L358.2 408.0L336.1 408.0L336.6 396.6"/><polygon stroke="none" fill="#ad5515" points="359.5,420.7 385.3,420.7 385.3,424.5 364.5,425.3 364.5,443.5 383.5,444.8 383.5,447.3 359.5,446.5"/><path fill="none" d="M359.5 420.7L385.3 420.7L385.3 424.5L364.5 425.3L364.5 443.5L383.5 444.8L383.5 447.3L359.5 446.5L359.5 420.7"/><polygon stroke="none" fill="#ffff80" points="379.7,435.9 384.3,434.6 384.3,444.8 379.2,443.5"/><path fill="none" d="M379.7 435.9L384.3 434.6L384.3 444.8L379.2 443.5L379.7 435.9"/><polygon stroke="none" fill="#ffff80" points="308.8,446.5 359.5,447.3 360.0,471.9 308.8,471.4"/><path fill="none" d="M308.8 446.5L359.5 447.3L360.0 471.9L308.8 471.4L308.8 446.5"/><polygon stroke="none" fill="#ffff80" points="360.0,448.6 383.5,447.3 383.5,458.7 360.0,460.0"/><path fill="none" d="M360.0 448.6L383.5 447.3L383.5 458.7L360.0 460.0L360.0 448.6"/><polygon stroke="none" fill="#fbd158" points="308.8,473.9 359.5,474.4 360.0,496.2 307.5,496.2"/><path fill="none" d="M308.8 473.9L359.5 474.4L360.0 496.2L307.5 496.2L308.8 473.9"/><polygon stroke="none" fill="#ad5515" points="379.7,476.5 389.9,472.1 412.7,472.6 425.3,481.5 427.9,489.6 402.5,482.8"/><path fill="none" d="M379.7 476.5L389.9 472.1L412.7 472.6L425.3 481.5L427.9 489.6L402.5 482.8L379.7 476.5"/><polygon stroke="none" fill="#ffff80" points="416.5,332.0 455.8,332.0 451.9,348.5 417.7,340.9"/><path fill="none" d="M455.8 332.0L451.9 348.5L417.7 340.9L416.5 332.0"/><polygon stroke="none" fill="#ffff80" points="401.3,391.6 421.5,398.4 416.5,414.4 397.0,406.8"/><path fill="none" d="M401.3 391.6L421.5 398.4L416.5 414.4L397.0 406.8L401.3 391.6"/><polygon stroke="none" fill="#fbd158" points="373.4,357.3 387.3,351.0 387.3,386.5 374.7,380.2 369.6,362.4"/><path fill="none" d="M373.4 357.3L387.3 351.0L387.3 386.5L374.7 380.2L369.6 362.4L373.4 357.3"/><polygon stroke="none" fill="#fbd158" points="397.5,486.6 425.3,490.4 425.3,524.6 402.5,524.6 394.9,506.9"/><path fill="none" d="M397.5 486.6L425.3 490.4L425.3 524.6M402.5 524.6L394.9 506.9L397.5 486.6"/><polygon stroke="none" fill="#ffff80" points="438.0,499.3 449.4,496.7 465.9,509.4 478.6,524.6 430.4,524.6"/><path fill="none" d="M438.0 499.3L449.4 496.7L465.9 509.4L478.6 524.6M430.4 524.6L438.0 499.3"/><polygon stroke="none" fill="#ffff80" points="215.0,332.0 232.7,332.0 222.6,335.8 215.0,336.6"/><path fill="none" d="M232.7 332.0L222.6 335.8L215.0 336.6"/><polyline fill="none" points="310.8,332.0 310.8,370.0"/><polyline fill="none" points="215.0,470.1 308.8,471.4 379.7,473.9"/><polyline fill="none" points="215.0,471.9 308.8,473.2 379.7,475.7"/><polyline fill="none" points="215.0,496.7 247.9,494.2 307.5,496.2"/><polyline fill="none" points="349.3,370.0 387.3,386.5 422.8,397.9 435.5,415.6 440.5,438.4"/><polyline fill="none" points="351.8,368.7 389.9,385.2 425.3,396.6"/><polyline fill="none" points="359.5,332.0 374.7,380.2"/><polyline fill="none" points="387.3,348.5 475.0,349.7"/><polyline fill="none" points="387.3,348.5 385.3,397.4"/><polyline fill="none" points="364.5,429.6 383.5,424.5"/><polyline fill="none" points="364.5,437.2 383.5,432.1"/><polyline fill="none" points="335.4,396.6 334.6,446.0"/><polyline fill="none" points="384.3,447.3 383.5,471.4"/><polyline fill="none" points="379.7,476.5 373.4,494.2 379.7,504.3 372.1,514.5 377.2,524.6"/><polyline fill="none" points="402.5,482.8 394.9,506.9"/><polyline fill="none" points="392.4,448.6 407.6,446.0 410.1,456.2 402.5,468.8 389.9,470.1"/><polygon stroke="none" fill="#ad5515" points="420.3,398.4 430.4,405.5 432.9,413.1 421.5,409.3"/><path fill="none" d="M420.3 398.4L430.4 405.5L432.9 413.1L421.5 409.3L420.3 398.4"/><polygon stroke="none" fill="#ad5515" points="386.1,420.7 396.2,422.0 401.3,429.6 397.5,438.4 385.3,435.9 385.3,432.1 393.7,432.1 395.4,427.0 386.1,425.3"/><path fill="none" d="M386.1 420.7L396.2 422.0L401.3 429.6L397.5 438.4L385.3 435.9L385.3 432.1L393.7 432.1L395.4 427.0L386.1 425.3L386.1 420.7"/><polygon stroke="none" fill="#ffff80" points="398.7,414.4 407.6,415.6 406.3,420.7 397.5,419.4"/><path fill="none" d="M398.7 414.4L407.6 415.6L406.3 420.7L397.5 419.4L398.7 414.4"/><polygon stroke="none" fill="#fbd158" points="407.6,427.0 417.7,425.8 415.2,441.0 405.1,441.0"/><path fill="none" d="M407.6 427.0L417.7 425.8L415.2 441.0L405.1 441.0L407.6 427.0"/><polygon stroke="none" fill="#fbd158" points="420.3,415.6 435.5,414.4 436.7,428.3 427.9,438.4 417.7,433.4"/><path fill="none" d="M420.3 415.6L435.5 414.4L436.7 428.3L427.9 438.4L417.7 433.4L420.3 415.6"/><polyline fill="none" points="411.4,362.4 415.2,340.9 453.2,348.5"/><polyline fill="none" points="411.4,362.4 435.5,370.0 444.3,352.3"/><polyline fill="none" points="422.8,382.7 435.5,380.2 432.9,372.5"/><polyline fill="none" points="422.8,382.7 422.8,397.9"/><polyline fill="none" points="435.5,397.9 448.1,390.3 475.0,398.4"/><polygon stroke="none" fill="#fbd158" points="358.7,332.5 373.3,327.3 382.6,330.1 383.1,333.3 361.1,339.0"/><path fill="none" d="M358.7 332.5L373.3 327.3L382.6 330.1L383.1 333.3L361.1 339.0L358.7 332.5"/><polygon stroke="none" fill="#ffff80" points="361.1,339.0 383.1,333.3 383.9,337.4 364.4,345.2"/><path fill="none" d="M361.1 339.0L383.1 333.3L383.9 337.4L364.4 345.2L361.1 339.0"/><polyline fill="none" points="358.7,332.5 364.4,345.2 375.0,379.7"/><polyline fill="none" points="364.4,345.2 394.5,335.0 395.3,339.8 375.0,358.5 372.5,350.4 383.1,346.3"/><polygon stroke="none" fill="#fbd158" points="372.5,350.4 383.1,346.0 384.7,348.8 373.8,353.7"/><path fill="none" d="M372.5 350.4L383.1 346.0L384.7 348.8L373.8 353.7L372.5 350.4"/><polygon stroke="none" fill="#ffff80" points="388.0,348.8 394.5,348.8 395.3,351.2 388.0,353.7"/><path fill="none" d="M388.0 348.8L394.5 348.8L395.3 351.2L388.0 353.7L388.0 348.8"/><polygon stroke="none" fill="#ffff80" points="418.9,340.7 433.5,343.9 432.7,348.8 418.0,348.5"/><path fill="none" d="M418.9 340.7L433.5 343.9L432.7 348.8L418.0 348.5L418.9 340.7"/><polygon stroke="none" fill="#ad5515" points="415.6,359.3 434.3,364.2 434.0,368.3 414.8,363.4"/><path fill="none" d="M415.6 359.3L434.3 364.2L434.0 368.3L414.8 363.4L415.6 359.3"/><polygon stroke="none" fill="#ffff80" points="435.9,361.0 442.4,362.6 440.0,369.9 434.3,368.3"/><path fill="none" d="M435.9 361.0L442.4 362.6L440.0 369.9L434.3 368.3L435.9 361.0"/><polygon stroke="none" fill="#ffff80" points="445.7,361.8 450.6,352.0 453.8,352.8 448.6,364.2"/><path fill="none" d="M445.7 361.8L450.6 352.0L453.8 352.8L448.6 364.2L445.7 361.8"/><polygon stroke="none" fill="#ad5515" points="452.2,356.1 463.6,354.5 459.5,366.7 450.6,364.2"/><path fill="none" d="M452.2 356.1L463.6 354.5L459.5 366.7L450.6 364.2L452.2 356.1"/><polygon stroke="none" fill="#ffff80" points="468.5,356.9 474.1,357.7 473.3,362.6 467.6,361.8"/><path fill="none" d="M468.5 356.9L474.1 357.7L473.3 362.6L467.6 361.8L468.5 356.9"/><polygon stroke="none" fill="#fbd158" points="467.6,361.8 473.3,362.6 472.5,367.5 466.0,365.9"/><path fill="none" d="M467.6 361.8L473.3 362.6L472.5 367.5L466.0 365.9L467.6 361.8"/><polygon stroke="none" fill="#fbd158" points="431.1,369.1 439.2,370.7 437.6,378.0 431.1,380.5"/><path fill="none" d="M431.1 369.1L439.2 370.7L437.6 378.0L431.1 380.5L431.1 369.1"/><polygon stroke="none" fill="#ad5515" points="435.1,381.3 444.1,376.4 456.3,374.0 456.3,382.1 442.4,381.3 438.4,382.1 438.4,397.6 435.1,398.4"/><path fill="none" d="M435.1 381.3L444.1 376.4L456.3 374.0L456.3 382.1L442.4 381.3L438.4 382.1L438.4 397.6L435.1 398.4L435.1 381.3"/><polygon stroke="none" fill="#fbd158" points="442.4,382.1 456.3,382.1 456.3,385.4 442.4,385.4"/><path fill="none" d="M442.4 382.1L456.3 382.1L456.3 385.4L442.4 385.4L442.4 382.1"/><polygon stroke="none" fill="#ffff80" points="439.2,390.2 448.1,390.2 448.1,395.9 439.2,397.6"/><path fill="none" d="M439.2 390.2L448.1 390.2L448.1 395.9L439.2 397.6L439.2 390.2"/><polygon stroke="none" fill="#fbd158" points="462.8,382.1 467.6,384.6 466.8,393.5 462.8,391.1"/><path fill="none" d="M462.8 382.1L467.6 384.6L466.8 393.5L462.8 391.1L462.8 382.1"/><polygon stroke="none" fill="#fbd158" points="468.5,386.2 473.3,387.8 472.5,395.1 468.5,393.5"/><path fill="none" d="M468.5 386.2L473.3 387.8L472.5 395.1L468.5 393.5L468.5 386.2"/><polyline fill="none" points="414.8,339.0 416.4,348.8 410.7,364.2 434.3,369.9"/><polyline fill="none" points="454.6,355.3 452.2,364.2"/><polyline fill="none" points="457.9,355.0 455.1,365.0"/><polygon stroke="none" fill="#fbd158" points="538.4,199.5 551.0,200.8 561.2,194.9 584.0,193.7 594.1,200.2 601.7,210.1 611.8,216.5 627.1,217.0 642.3,215.2 657.5,216.5 668.9,222.8 675.2,233.7 668.9,242.6 665.1,256.5 670.1,271.7 677.7,286.9 690.4,302.1 675.2,302.1 675.2,298.3 637.2,302.1 639.7,247.6 614.4,246.9 614.4,232.4 586.5,232.4 585.2,337.6 487.7,337.6 500.3,307.2 523.2,271.7 535.8,241.3"/><path fill="none" d="M538.4 199.5L551.0 200.8L561.2 194.9L584.0 193.7L594.1 200.2L601.7 210.1L611.8 216.5L627.1 217.0L642.3 215.2L657.5 216.5L668.9 222.8L675.2 233.7L668.9 242.6L665.1 256.5L670.1 271.7L677.7 286.9L690.4 302.1L675.2 302.1L675.2 298.3L637.2 302.1L639.7 247.6L614.4 246.9L614.4 232.4L586.5 232.4L585.2 337.6M487.7 337.6L500.3 307.2L523.2 271.7L535.8 241.3L538.4 199.5"/><polygon stroke="none" fill="#ffff80" points="503.6,147.5 529.7,147.5 526.7,153.1 534.8,161.2 537.8,168.1 533.5,169.3 524.9,161.2 516.1,153.6"/><path fill="none" d="M503.6 147.5L529.7 147.5L526.7 153.1L534.8 161.2L537.8 168.1L533.5 169.3L524.9 161.2L516.1 153.6L503.6 147.5"/><polygon stroke="none" fill="#ad5515" points="550.5,200.2 554.1,191.4 563.7,188.8 576.4,191.4 581.4,187.6 594.6,188.1 604.8,199.0 614.4,209.1 627.1,205.3 642.3,198.2 658.0,199.0 668.1,209.1 673.2,218.5 668.9,222.8 657.5,216.5 642.3,215.2 627.1,217.0 611.8,216.5 601.2,210.4 593.6,201.3 584.5,195.2 576.4,196.4 561.2,197.0 554.8,201.3"/><path fill="none" d="M550.5 200.2L554.1 191.4L563.7 188.8L576.4 191.4L581.4 187.6L594.6 188.1L604.8 199.0L614.4 209.1L627.1 205.3L642.3 198.2L658.0 199.0L668.1 209.1L673.2 218.5L668.9 222.8L657.5 216.5L642.3 215.2L627.1 217.0L611.8 216.5L601.2 210.4L593.6 201.3L584.5 195.2L576.4 196.4L561.2 197.0L554.8 201.3L550.5 200.2"/><polygon stroke="none" fill="#ffff80" points="538.4,202.0 549.8,200.8 542.2,228.6 529.5,266.6 525.7,264.1 539.6,228.6 537.1,218.5"/><path fill="none" d="M538.4 202.0L549.8 200.8L542.2 228.6L529.5 266.6L525.7 264.1L539.6 228.6L537.1 218.5L538.4 202.0"/><polygon stroke="none" fill="#ffff80" points="513.0,276.8 521.9,271.7 505.4,297.1 490.2,322.4 485.1,337.6 480.1,337.6 500.3,299.6"/><path fill="none" d="M513.0 276.8L521.9 271.7L505.4 297.1L490.2 322.4L485.1 337.6M480.1 337.6L500.3 299.6L513.0 276.8"/><polygon stroke="none" fill="#ffff80" points="539.6,319.9 551.0,322.4 571.3,332.0 586.5,337.6 539.6,337.6"/><path fill="none" d="M539.6 319.9L551.0 322.4L571.3 332.0L586.5 337.6M539.6 337.6L539.6 319.9"/><polygon stroke="none" fill="#fbd158" points="492.7,193.2 520.6,194.4 535.8,199.5 532.0,210.9 523.2,224.8 492.7,222.3"/><path fill="none" d="M492.7 193.2L520.6 194.4L535.8 199.5L532.0 210.9L523.2 224.8L492.7 222.3L492.7 193.2"/><polygon stroke="none" fill="#ffff80" points="492.7,193.2 514.3,193.2 510.5,198.2 497.8,199.5 492.7,197.0"/><path fill="none" d="M492.7 193.2L514.3 193.2L510.5 198.2L497.8 199.5L492.7 197.0L492.7 193.2"/><polygon stroke="none" fill="#f0a62e" points="523.2,224.8 532.0,210.9 538.4,221.0 538.4,231.2"/><path fill="none" d="M523.2 224.8L532.0 210.9L538.4 221.0L538.4 231.2L523.2 224.8"/><polygon stroke="none" fill="#fbd158" points="515.5,212.2 524.4,211.4 523.9,221.0 515.5,221.5"/><path fill="none" d="M515.5 212.2L524.4 211.4L523.9 221.0L515.5 221.5L515.5 212.2"/><polygon stroke="none" fill="#ffff80" points="502.4,233.2 510.5,233.2 510.5,246.4 502.4,246.4"/><path fill="none" d="M502.4 233.2L510.5 233.2L510.5 246.4L502.4 246.4L502.4 233.2"/><polygon stroke="none" fill="#ad5515" points="672.7,233.7 682.8,237.5 675.2,246.4 668.9,248.9 668.9,241.3"/><path fill="none" d="M672.7 233.7L682.8 237.5L675.2 246.4L668.9 248.9L668.9 241.3L672.7 233.7"/><polygon stroke="none" fill="#ad5515" points="668.9,271.7 677.7,281.8 691.7,302.1 685.3,302.1 675.2,289.5"/><path fill="none" d="M668.9 271.7L677.7 281.8L691.7 302.1L685.3 302.1L675.2 289.5L668.9 271.7"/><polygon stroke="none" fill="#ad5515" points="675.2,298.3 682.8,302.1 681.5,307.2 676.5,307.2"/><path fill="none" d="M675.2 298.3L682.8 302.1L681.5 307.2L676.5 307.2L675.2 298.3"/><polygon stroke="none" fill="#ffff80" points="682.8,236.2 703.1,233.7 725.9,236.2 738.6,242.6 738.6,337.6 706.9,337.6 698.0,312.3 691.7,302.1 677.7,281.8 668.9,269.2 666.3,256.5 670.1,248.9"/><path fill="none" d="M682.8 236.2L703.1 233.7L725.9 236.2L738.6 242.6M706.9 337.6L698.0 312.3L691.7 302.1L677.7 281.8L668.9 269.2L666.3 256.5L670.1 248.9L682.8 236.2"/><polygon stroke="none" fill="#ffff80" points="705.6,222.3 719.6,219.8 738.6,221.0 738.6,233.7 725.9,228.6"/><path fill="none" d="M705.6 222.3L719.6 219.8L738.6 221.0M738.6 233.7L725.9 228.6L705.6 222.3"/><polygon stroke="none" fill="#ffff80" points="668.9,201.3 676.5,203.3 675.2,207.1"/><path fill="none" d="M668.9 201.3L676.5 203.3L675.2 207.1L668.9 201.3"/><polygon stroke="none" fill="#ffff80" points="719.6,205.8 723.4,207.1 722.1,212.2 719.6,211.4"/><path fill="none" d="M719.6 205.8L723.4 207.1L722.1 212.2L719.6 211.4L719.6 205.8"/><polygon stroke="none" fill="#f0a62e" points="507.9,299.6 523.2,304.7 520.6,309.7 538.4,319.9 538.4,337.6 500.3,337.6 499.1,314.8 513.0,309.7"/><path fill="none" d="M507.9 299.6L523.2 304.7L520.6 309.7L538.4 319.9L538.4 337.6M500.3 337.6L499.1 314.8L513.0 309.7L507.9 299.6"/><ellipse fill="#fbd158" cx="510.5" cy="321.1" rx="5.6" ry="3.0"/><polyline fill="none" points="517.3,204.6 517.3,209.6"/><polyline fill="none" points="519.6,204.6 519.6,209.6"/><polyline fill="none" points="521.9,204.6 521.9,209.6"/><polyline fill="none" points="524.2,204.6 524.2,209.6"/><polyline fill="none" points="526.4,204.6 526.4,209.6"/><polyline fill="none" points="516.8,204.6 528.2,204.6 528.2,209.6 516.8,209.6 516.8,204.6"/><polyline fill="none" points="515.5,216.0 524.4,215.5"/><polyline fill="none" points="506.4,233.2 506.4,246.4"/><polyline fill="none" points="481.3,147.5 485.1,183.0 492.7,193.2 492.7,222.3 475.0,222.3"/><polyline fill="none" points="492.7,222.3 490.2,251.4 482.6,254.0 480.1,241.3 482.6,222.3"/><polyline fill="none" points="492.7,193.2 538.4,167.8 558.6,158.9 576.4,156.4 596.6,165.3 609.3,183.0 611.8,190.6 657.5,193.2 677.7,205.8 718.3,213.4 735.0,212.2"/><polyline fill="none" points="515.5,193.2 546.0,175.4 571.3,161.5 581.4,165.3 589.0,183.0 594.1,188.6"/><polyline fill="none" points="695.5,147.5 710.7,170.3 719.6,203.3 719.6,219.8"/><polyline fill="none" points="611.8,190.6 551.0,191.9"/><polyline fill="none" points="682.8,233.7 692.9,226.1 719.6,219.8"/><polyline fill="none" points="475.0,261.6 494.0,313.5"/><polyline fill="none" points="480.1,275.5 523.2,248.9 538.4,232.4"/><polyline fill="none" points="539.6,273.0 563.7,271.7 570.0,218.5 556.1,199.5"/><polyline fill="none" points="539.6,273.0 539.6,319.9"/><polyline fill="none" points="591.6,221.0 599.2,213.4 594.1,202.0"/><polyline fill="none" points="551.0,199.5 494.0,313.5 485.1,337.6"/><polyline fill="none" points="553.6,199.5 496.5,313.5 488.9,337.6"/><polyline fill="none" points="675.2,298.3 675.2,337.6"/><polyline fill="none" points="690.4,302.1 692.9,319.9 703.1,332.5"/><polygon stroke="none" fill="#ffff80" points="760.3,145.0 788.2,145.0 787.0,190.6 780.6,208.4 783.2,218.5 781.9,233.7 770.5,233.7 775.5,221.0 770.5,213.4 773.0,199.5 760.3,194.4 770.5,185.5 771.7,165.3"/><path fill="none" d="M788.2 145.0L787.0 190.6L780.6 208.4L783.2 218.5L781.9 233.7L770.5 233.7L775.5 221.0L770.5 213.4L773.0 199.5L760.3 194.4L770.5 185.5L771.7 165.3L760.3 145.0"/><polygon stroke="none" fill="#ad5515" points="794.6,145.0 903.5,145.0 885.8,161.5 884.5,171.6 873.1,181.7 859.2,180.0 851.6,189.3 850.3,194.4 841.4,198.2 844.0,222.3 831.3,223.6 816.1,228.6 811.0,251.4 807.2,262.8 804.7,271.7 788.2,264.1 787.0,256.5 787.0,218.5 788.2,190.6 793.3,170.3"/><path fill="none" d="M903.5 145.0L885.8 161.5L884.5 171.6L873.1 181.7L859.2 180.0L851.6 189.3L850.3 194.4L841.4 198.2L844.0 222.3L831.3 223.6L816.1 228.6L811.0 251.4L807.2 262.8L804.7 271.7L788.2 264.1L787.0 256.5L787.0 218.5L788.2 190.6L793.3 170.3L794.6 145.0"/><polygon stroke="none" fill="#ffff80" points="816.1,228.6 831.3,223.6 844.0,222.3 841.4,198.2 844.0,195.7 856.6,236.2 866.8,248.9 859.2,257.8 807.2,262.8 811.0,251.4"/><path fill="none" d="M816.1 228.6L831.3 223.6L844.0 222.3L841.4 198.2L844.0 195.7L856.6 236.2L866.8 248.9L859.2 257.8L807.2 262.8L811.0 251.4L816.1 228.6"/><polygon stroke="none" fill="#f0a62e" points="844.0,250.2 865.5,247.6 866.8,256.5 844.0,258.5"/><path fill="none" d="M844.0 250.2L865.5 247.6L866.8 256.5L844.0 258.5L844.0 250.2"/><polygon stroke="none" fill="#f0a62e" points="844.0,195.7 850.3,194.4 851.6,189.3 859.2,180.0 873.1,181.7 868.0,203.3 873.1,221.0 871.8,236.2 866.8,248.9 856.6,236.2"/><path fill="none" d="M844.0 195.7L850.3 194.4L851.6 189.3L859.2 180.0L873.1 181.7L868.0 203.3L873.1 221.0L871.8 236.2L866.8 248.9L856.6 236.2L844.0 195.7"/><polygon stroke="none" fill="#ffff80" points="873.1,181.7 884.5,171.6 885.8,161.5 903.5,145.0 942.8,145.0 935.2,162.7 923.8,174.1 912.4,175.4 897.2,174.1 882.0,185.5 871.8,198.2 869.3,205.8 874.4,221.0 873.1,238.8 876.9,251.4 871.8,254.0 866.8,248.9 871.8,236.2 873.1,221.0 868.0,203.3"/><path fill="none" d="M873.1 181.7L884.5 171.6L885.8 161.5L903.5 145.0M942.8 145.0L935.2 162.7L923.8 174.1L912.4 175.4L897.2 174.1L882.0 185.5L871.8 198.2L869.3 205.8L874.4 221.0L873.1 238.8L876.9 251.4L871.8 254.0L866.8 248.9L871.8 236.2L873.1 221.0L868.0 203.3L873.1 181.7"/><polygon stroke="none" fill="#fbd158" points="860.4,251.4 868.0,248.9 869.3,254.0 863.0,260.3"/><path fill="none" d="M860.4 251.4L868.0 248.9L869.3 254.0L863.0 260.3L860.4 251.4"/><polygon stroke="none" fill="#ad5515" points="807.2,262.8 859.2,257.8 871.8,254.0 870.6,259.0 861.7,264.1 841.4,271.7 818.6,283.1 804.7,271.7"/><path fill="none" d="M807.2 262.8L859.2 257.8L871.8 254.0L870.6 259.0L861.7 264.1L841.4 271.7L818.6 283.1L804.7 271.7L807.2 262.8"/><polygon stroke="none" fill="#fbd158" points="787.0,262.8 795.8,266.6 817.4,281.8 814.8,285.6 808.5,283.1 787.0,271.7"/><path fill="none" d="M787.0 262.8L795.8 266.6L817.4 281.8L814.8 285.6L808.5 283.1L787.0 271.7L787.0 262.8"/><polygon stroke="none" fill="#ad5515" points="787.0,271.7 808.5,283.1 814.8,285.6 818.6,283.1 866.8,307.2 893.1,332.0 899.7,337.6 854.1,337.6 836.4,319.9 823.7,307.2 818.6,299.6 811.0,294.5 798.4,294.5 789.5,283.1 787.0,279.3"/><path fill="none" d="M787.0 271.7L808.5 283.1L814.8 285.6L818.6 283.1L866.8 307.2L893.1 332.0L899.7 337.6M854.1 337.6L836.4 319.9L823.7 307.2L818.6 299.6L811.0 294.5L798.4 294.5L789.5 283.1L787.0 279.3L787.0 271.7"/><polygon stroke="none" fill="#ffff80" points="876.9,280.6 912.4,281.8 920.0,273.0 937.7,276.8 955.5,269.2 965.6,265.4 975.8,262.8 984.6,246.4 983.4,236.2 1013.8,232.4 1013.8,337.6 916.2,337.6 909.9,319.9 907.3,312.3 897.2,307.2 887.1,293.3"/><path fill="none" d="M876.9 280.6L912.4 281.8L920.0 273.0L937.7 276.8L955.5 269.2L965.6 265.4L975.8 262.8L984.6 246.4L983.4 236.2L1013.8 232.4M916.2 337.6L909.9 319.9L907.3 312.3L897.2 307.2L887.1 293.3L876.9 280.6"/><polygon stroke="none" fill="#ffff80" points="735.0,225.6 747.7,231.2 760.3,240.8 756.5,244.3 745.1,237.5 735.0,233.7"/><path fill="none" d="M735.0 225.6L747.7 231.2L760.3 240.8L756.5 244.3L745.1 237.5L735.0 233.7"/><polyline fill="none" points="735.0,212.2 750.2,214.7 767.9,233.7"/><polygon stroke="none" fill="#ffff80" points="735.0,245.1 742.6,254.0 760.3,286.9 773.0,299.6 784.4,304.7 785.7,337.6 735.0,337.6"/><path fill="none" d="M735.0 245.1L742.6 254.0L760.3 286.9L773.0 299.6L784.4 304.7L785.7 337.6"/><polygon stroke="none" fill="#fbd158" points="770.5,233.7 781.9,233.7 780.6,245.1 770.5,236.2"/><path fill="none" d="M770.5 233.7L781.9 233.7L780.6 245.1L770.5 236.2L770.5 233.7"/><polygon stroke="none" fill="#fbd158" points="787.0,279.3 789.5,283.1 798.4,294.5 797.1,302.1 811.0,332.5 813.6,337.6 785.7,337.6"/><path fill="none" d="M787.0 279.3L789.5 283.1L798.4 294.5L797.1 302.1L811.0 332.5L813.6 337.6M785.7 337.6L787.0 279.3"/><polyline fill="none" points="787.0,145.0 785.7,337.6"/><polyline fill="none" points="787.0,218.5 800.9,221.0 800.9,245.1 787.0,246.4"/><polyline fill="none" points="750.2,147.5 745.1,195.7 735.0,207.1"/><polyline fill="none" points="735.0,240.8 755.3,254.0 780.6,262.8 787.0,271.7"/><polyline fill="none" points="760.3,240.8 767.9,233.7 785.7,256.5 762.9,245.1 755.3,254.0"/><polyline fill="none" points="844.0,237.5 859.2,237.5 865.5,247.6 844.0,250.2 844.0,237.5"/><polyline fill="none" points="850.3,194.4 856.6,216.0 869.3,226.1"/><polyline fill="none" points="787.0,256.5 807.2,262.8"/><polyline fill="none" points="876.9,251.4 897.2,241.3 907.3,226.1 925.1,219.8 955.5,216.0 975.8,208.4"/><polyline fill="none" points="859.2,257.8 866.8,276.8 887.1,293.3"/><polyline fill="none" points="818.6,283.1 861.7,264.1"/><polygon stroke="none" fill="#ffff80" points="880.0,280.6 909.1,281.8 919.3,273.0 938.3,275.5 958.6,265.4 975.0,262.8 983.9,246.4 983.4,236.2 1005.4,232.4 1011.8,232.4 1011.8,337.6 914.2,337.6 905.3,312.3 880.0,288.2"/><path fill="none" d="M880.0 280.6L909.1 281.8L919.3 273.0L938.3 275.5L958.6 265.4L975.0 262.8L983.9 246.4L983.4 236.2L1005.4 232.4L1011.8 232.4L1011.8 337.6M914.2 337.6L905.3 312.3L880.0 288.2"/><polyline fill="none" points="966.2,147.5 967.4,170.3 971.2,180.5 964.9,188.1 975.0,203.3 976.3,226.1 986.4,232.4"/><polygon stroke="none" fill="#ffff80" points="500.3,349.7 556.1,350.2 570.0,370.0 622.0,370.5 622.0,396.6 632.1,397.4 613.1,430.8 611.8,450.6 592.8,450.6 591.6,460.0 586.5,461.2 586.5,413.1 573.8,415.6 561.2,410.6 548.5,411.8 535.8,414.4 520.6,408.0 505.4,400.4 490.2,394.1 487.7,392.8 494.0,370.0 499.1,354.8"/><path fill="none" d="M500.3 349.7L556.1 350.2L570.0 370.0L622.0 370.5L622.0 396.6L632.1 397.4L613.1 430.8L611.8 450.6L592.8 450.6L591.6 460.0L586.5 461.2L586.5 413.1L573.8 415.6L561.2 410.6L548.5 411.8L535.8 414.4L520.6 408.0L505.4 400.4L490.2 394.1L487.7 392.8L494.0 370.0L499.1 354.8L500.3 349.7"/><polygon stroke="none" fill="#ffff80" points="539.6,332.0 584.5,332.0 584.5,349.2 556.1,350.2"/><path fill="none" d="M584.5 332.0L584.5 349.2L556.1 350.2L539.6 332.0"/><polygon stroke="none" fill="#ffff80" points="475.0,332.0 494.0,332.0 492.7,347.2 475.0,349.7"/><path fill="none" d="M494.0 332.0L492.7 347.2L475.0 349.7"/><polygon stroke="none" fill="#ad5515" points="487.7,394.1 505.4,400.9 520.6,408.5 535.8,414.9 548.5,412.3 561.2,411.1 573.8,416.1 586.5,413.1 586.5,461.2 573.8,470.1 566.2,473.9 548.5,472.6 535.8,477.7 518.1,478.5 515.5,470.1 520.6,463.8 513.0,458.7 513.0,441.0 501.6,437.2 501.6,433.4 486.4,433.4"/><path fill="none" d="M487.7 394.1L505.4 400.9L520.6 408.5L535.8 414.9L548.5 412.3L561.2 411.1L573.8 416.1L586.5 413.1L586.5 461.2L573.8 470.1L566.2 473.9L548.5 472.6L535.8 477.7L518.1 478.5L515.5 470.1L520.6 463.8L513.0 458.7L513.0 441.0L501.6 437.2L501.6 433.4L486.4 433.4L487.7 394.1"/><ellipse fill="#fbd158" cx="511.0" cy="382.7" rx="4.6" ry="6.6"/><polygon stroke="none" fill="#ad5515" points="513.0,391.6 521.9,391.6 519.3,398.4"/><path fill="none" d="M513.0 391.6L521.9 391.6L519.3 398.4L513.0 391.6"/><polygon stroke="none" fill="#fbd158" points="592.8,450.6 611.8,450.6 611.8,463.8 601.7,458.7 592.8,460.0"/><path fill="none" d="M592.8 450.6L611.8 450.6L611.8 463.8L601.7 458.7L592.8 460.0L592.8 450.6"/><polygon stroke="none" fill="#ffff80" points="611.8,477.0 738.6,477.0 738.6,524.6 699.3,524.6 687.9,506.9 677.7,496.7 665.1,490.4 652.4,487.9 639.7,486.6 627.1,485.3 616.9,479.0 613.1,470.1 620.7,470.1 621.5,475.2"/><path fill="none" d="M611.8 477.0L738.6 477.0M699.3 524.6L687.9 506.9L677.7 496.7L665.1 490.4L652.4 487.9L639.7 486.6L627.1 485.3L616.9 479.0L613.1 470.1L620.7 470.1L621.5 475.2L611.8 477.0"/><polygon stroke="none" fill="#fbd158" points="611.8,479.0 627.1,485.8 652.4,488.4 677.7,497.2 687.9,507.4 699.3,524.6 610.6,524.6"/><path fill="none" d="M611.8 479.0L627.1 485.8L652.4 488.4L677.7 497.2L687.9 507.4L699.3 524.6M610.6 524.6L611.8 479.0"/><polygon stroke="none" fill="#ffff80" points="704.3,332.0 738.6,332.0 738.6,351.0 728.4,349.7"/><path fill="none" d="M738.6 351.0L728.4 349.7L704.3 332.0"/><polygon stroke="none" fill="#ffff80" points="543.4,476.5 553.6,477.7 548.5,484.1 542.2,481.5"/><path fill="none" d="M543.4 476.5L553.6 477.7L548.5 484.1L542.2 481.5L543.4 476.5"/><polygon stroke="none" fill="#ffff80" points="485.1,489.1 502.9,491.7 507.9,524.6 485.1,524.6"/><path fill="none" d="M485.1 489.1L502.9 491.7L507.9 524.6M485.1 524.6L485.1 489.1"/><polygon stroke="none" fill="#ad5515" points="510.5,473.9 515.5,473.9 515.5,486.6 511.7,487.9"/><path fill="none" d="M510.5 473.9L515.5 473.9L515.5 486.6L511.7 487.9L510.5 473.9"/><polygon stroke="none" fill="#ffff80" points="486.4,434.6 501.6,434.6 501.6,451.1 486.4,446.0"/><path fill="none" d="M486.4 434.6L501.6 434.6L501.6 451.1L486.4 446.0L486.4 434.6"/><polygon stroke="none" fill="#ffff80" points="500.3,349.7 505.9,349.7 505.4,358.6 500.3,357.3"/><path fill="none" d="M500.3 349.7L505.9 349.7L505.4 358.6L500.3 357.3L500.3 349.7"/><polyline fill="none" points="556.1,350.2 500.3,349.7"/><polyline fill="none" points="584.5,332.0 622.0,370.5 633.4,395.4"/><polyline fill="none" points="675.2,332.0 674.7,349.7 735.0,351.0"/><polyline fill="none" points="728.4,349.7 728.4,370.0 735.0,372.5"/><polyline fill="none" points="632.1,397.4 701.8,400.4 701.8,477.0"/><polyline fill="none" points="701.8,405.5 735.0,401.7"/><polyline fill="none" points="611.8,450.6 647.3,451.6 647.3,477.0"/><polyline fill="none" points="561.2,411.1 568.8,428.3 582.7,443.5 538.4,451.1 513.0,456.2"/><polyline fill="none" points="591.6,460.0 590.3,494.2 561.2,494.2 561.2,476.5"/><polyline fill="none" points="611.8,463.8 610.6,524.6"/><polyline fill="none" points="596.6,460.0 606.8,463.8 616.9,479.0"/><polyline fill="none" points="548.5,484.1 543.4,496.7 548.5,504.3 553.6,524.6"/><polyline fill="none" points="499.1,332.0 494.0,370.0 485.1,394.1"/><polyline fill="none" points="495.3,332.0 490.2,370.0 482.1,394.1"/><polyline fill="none" points="502.9,491.7 513.0,524.6"/><polyline fill="none" points="515.5,486.6 535.8,524.6"/><polygon stroke="none" fill="#ffff80" points="735.0,332.0 785.7,332.0 785.7,350.2 735.0,350.2"/><path fill="none" d="M785.7 332.0L785.7 350.2L735.0 350.2"/><polygon stroke="none" fill="#fbd158" points="785.7,332.0 816.1,332.0 817.4,344.7 811.0,353.5 816.1,378.9 811.0,384.0 803.4,382.7 789.5,376.3 757.8,372.5 750.2,359.9 735.0,353.5 735.0,350.2 785.7,350.2"/><path fill="none" d="M816.1 332.0L817.4 344.7L811.0 353.5L816.1 378.9L811.0 384.0L803.4 382.7L789.5 376.3L757.8 372.5L750.2 359.9L735.0 353.5M735.0 350.2L785.7 350.2L785.7 332.0"/><polygon stroke="none" fill="#ffff80" points="761.6,391.6 789.5,377.6 802.2,384.0 793.3,382.7 762.9,394.1"/><path fill="none" d="M761.6 391.6L789.5 377.6L802.2 384.0L793.3 382.7L762.9 394.1L761.6 391.6"/><polygon stroke="none" fill="#ad5515" points="851.6,332.0 894.1,332.0 922.5,345.9 937.7,354.8 960.5,363.7 954.2,389.0 942.8,382.7 930.1,381.4 911.1,381.4 911.1,357.3 890.1,349.7 890.1,359.9 871.8,357.3 860.4,348.5 856.6,338.3"/><path fill="none" d="M894.1 332.0L922.5 345.9L937.7 354.8L960.5 363.7L954.2 389.0L942.8 382.7L930.1 381.4L911.1 381.4L911.1 357.3L890.1 349.7L890.1 359.9L871.8 357.3L860.4 348.5L856.6 338.3L851.6 332.0"/><polygon stroke="none" fill="#ffff80" points="890.1,363.7 895.2,366.2 896.4,395.4 892.1,410.6 890.1,408.0"/><path fill="none" d="M890.1 363.7L895.2 366.2L896.4 395.4L892.1 410.6L890.1 408.0L890.1 363.7"/><polygon stroke="none" fill="#f0a62e" points="927.6,370.0 933.9,366.2 954.2,389.0 950.4,392.8 935.2,385.2"/><path fill="none" d="M927.6 370.0L933.9 366.2L954.2 389.0L950.4 392.8L935.2 385.2L927.6 370.0"/><polygon stroke="none" fill="#ad5515" points="811.0,353.5 818.6,367.5 836.4,382.7 854.1,390.8 847.8,419.4 837.6,431.3 835.1,456.2 830.0,468.8 827.5,481.5 816.1,485.3 821.2,476.5 813.6,461.2 807.2,448.6 814.8,441.0 813.6,431.3 799.6,429.6 798.4,405.5 795.8,396.6 802.2,386.5 811.0,384.0 816.1,378.9"/><path fill="none" d="M811.0 353.5L818.6 367.5L836.4 382.7L854.1 390.8L847.8 419.4L837.6 431.3L835.1 456.2L830.0 468.8L827.5 481.5L816.1 485.3L821.2 476.5L813.6 461.2L807.2 448.6L814.8 441.0L813.6 431.3L799.6 429.6L798.4 405.5L795.8 396.6L802.2 386.5L811.0 384.0L816.1 378.9L811.0 353.5"/><polygon stroke="none" fill="#ffff80" points="854.1,390.8 859.2,392.8 864.2,401.7 873.1,406.8 875.6,419.4 902.3,439.7 912.4,432.9 911.1,453.1 892.1,457.4 887.1,458.7 884.5,449.8 871.8,437.2 847.8,419.4"/><path fill="none" d="M854.1 390.8L859.2 392.8L864.2 401.7L873.1 406.8L875.6 419.4L902.3 439.7L912.4 432.9L911.1 453.1L892.1 457.4L887.1 458.7L884.5 449.8L871.8 437.2L847.8 419.4L854.1 390.8"/><polygon stroke="none" fill="#ffff80" points="892.1,412.6 912.4,414.4 927.6,419.4 933.9,427.8 912.4,432.9 904.3,435.9 897.2,425.8"/><path fill="none" d="M892.1 412.6L912.4 414.4L927.6 419.4L933.9 427.8L912.4 432.9L904.3 435.9L897.2 425.8L892.1 412.6"/><polygon stroke="none" fill="#ad5515" points="888.3,458.7 892.1,457.4 911.1,453.1 917.5,461.2 930.1,470.1 933.9,477.7 932.7,482.8 909.9,481.5 894.7,480.3"/><path fill="none" d="M888.3 458.7L892.1 457.4L911.1 453.1L917.5 461.2L930.1 470.1L933.9 477.7L932.7 482.8L909.9 481.5L894.7 480.3L888.3 458.7"/><polygon stroke="none" fill="#ad5515" points="933.9,485.3 942.8,487.9 944.1,492.9 932.7,506.9"/><path fill="none" d="M933.9 485.3L942.8 487.9L944.1 492.9L932.7 506.9L933.9 485.3"/><polygon stroke="none" fill="#fbd158" points="926.3,482.8 932.7,482.8 932.7,506.9 927.6,514.5 923.8,524.6 925.1,496.7"/><path fill="none" d="M926.3 482.8L932.7 482.8L932.7 506.9L927.6 514.5L923.8 524.6L925.1 496.7L926.3 482.8"/><polygon stroke="none" fill="#fbd158" points="933.9,477.7 937.7,481.5 942.8,487.9 933.9,485.3"/><path fill="none" d="M933.9 477.7L937.7 481.5L942.8 487.9L933.9 485.3L933.9 477.7"/><polygon stroke="none" fill="#ffff80" points="952.9,433.4 961.8,434.6 965.6,441.0 963.1,451.1 984.6,456.2 1013.8,461.2 1013.8,524.6 964.3,524.6 960.5,506.9 960.5,486.6 956.7,481.5 955.5,473.9 952.4,456.2 955.5,443.5"/><path fill="none" d="M952.9 433.4L961.8 434.6L965.6 441.0L963.1 451.1L984.6 456.2L1013.8 461.2M964.3 524.6L960.5 506.9L960.5 486.6L956.7 481.5L955.5 473.9L952.4 456.2L955.5 443.5L952.9 433.4"/><polygon stroke="none" fill="#ffff80" points="916.2,332.0 1013.8,332.0 1013.8,352.3 988.4,353.5 958.0,354.3 937.7,351.0 922.5,344.7"/><path fill="none" d="M1013.8 352.3L988.4 353.5L958.0 354.3L937.7 351.0L922.5 344.7L916.2 332.0"/><polygon stroke="none" fill="#ffff80" points="985.9,356.1 1013.8,353.5 1013.8,372.5 984.6,366.2"/><path fill="none" d="M985.9 356.1L1013.8 353.5M1013.8 372.5L984.6 366.2L985.9 356.1"/><polygon stroke="none" fill="#fbd158" points="961.3,403.0 987.2,405.5 985.9,421.2 961.3,421.2"/><path fill="none" d="M961.3 403.0L987.2 405.5L985.9 421.2L961.3 421.2L961.3 403.0"/><polygon stroke="none" fill="#ffff80" points="922.5,382.7 935.2,382.7 935.2,387.8 925.1,399.2"/><path fill="none" d="M922.5 382.7L935.2 382.7L935.2 387.8L925.1 399.2L922.5 382.7"/><polygon stroke="none" fill="#ffff80" points="735.0,477.7 781.9,479.0 782.6,494.2 767.9,498.0 750.2,506.9 775.5,510.7 782.6,509.4 782.6,524.6 735.0,524.6"/><path fill="none" d="M735.0 477.7L781.9 479.0L782.6 494.2L767.9 498.0L750.2 506.9L775.5 510.7L782.6 509.4L782.6 524.6"/><polygon stroke="none" fill="#fbd158" points="782.6,494.2 803.4,486.6 816.1,485.3 827.5,481.5 831.3,490.4 828.8,499.3 818.6,506.9 808.5,514.5 806.0,500.5 798.4,500.5 792.0,506.9 782.6,509.4"/><path fill="none" d="M782.6 494.2L803.4 486.6L816.1 485.3L827.5 481.5L831.3 490.4L828.8 499.3L818.6 506.9L808.5 514.5L806.0 500.5L798.4 500.5L792.0 506.9L782.6 509.4L782.6 494.2"/><polygon stroke="none" fill="#ffff80" points="792.0,506.9 798.4,500.5 806.0,500.5 808.5,514.5 807.2,524.6 782.6,524.6 782.6,509.4"/><path fill="none" d="M792.0 506.9L798.4 500.5L806.0 500.5L808.5 514.5L807.2 524.6M782.6 524.6L782.6 509.4L792.0 506.9"/><ellipse fill="#ffff80" cx="897.2" cy="487.9" rx="3.5" ry="4.6"/><polyline fill="none" points="735.0,372.5 757.8,372.5 789.5,376.3"/><polyline fill="none" points="735.0,400.4 757.8,389.0 762.9,394.1"/><polyline fill="none" points="821.2,384.0 831.3,400.4 847.8,419.4"/><polyline fill="none" points="831.3,431.3 826.2,451.1 830.0,468.8"/><polyline fill="none" points="847.8,419.4 871.8,437.2 884.5,449.8 887.1,463.8 864.2,485.3 818.6,506.9 808.5,519.5"/><polyline fill="none" points="864.2,485.3 859.2,501.8 850.3,510.7 836.4,501.8 818.6,506.9"/><polyline fill="none" points="909.9,381.4 908.6,405.5 952.9,409.3 945.3,453.6 935.2,477.7"/><polyline fill="none" points="952.9,409.3 958.0,406.8"/><polyline fill="none" points="912.4,432.9 937.7,429.6 960.5,434.6"/><polyline fill="none" points="781.9,479.0 782.6,524.6"/><polyline fill="none" points="952.9,433.4 950.4,458.7 955.5,481.5 955.0,494.2"/><polygon stroke="none" fill="#ffff80" points="958.6,362.9 984.6,365.1 986.8,356.0 1008.5,349.5 1008.5,438.8 953.2,438.8 951.0,430.2 954.2,408.5 956.8,402.0 950.3,395.5 954.2,386.8 959.7,378.1"/><path fill="none" d="M958.6 362.9L984.6 365.1L986.8 356.0L1008.5 349.5M951.0 430.2L954.2 408.5L956.8 402.0L950.3 395.5L954.2 386.8L959.7 378.1L958.6 362.9"/><polygon stroke="none" fill="#f0a62e" points="965.1,386.8 971.6,380.7 982.4,374.2 993.3,380.3 1008.5,385.7 1008.5,400.2 991.1,407.8 987.9,405.0 965.1,401.1 956.8,402.0 952.1,395.5 956.8,387.9"/><path fill="none" d="M965.1 386.8L971.6 380.7L982.4 374.2L993.3 380.3L1008.5 385.7L1008.5 400.2L991.1 407.8L987.9 405.0L965.1 401.1L956.8 402.0L952.1 395.5L956.8 387.9L965.1 386.8"/><polygon stroke="none" fill="#fbd158" points="958.6,369.0 970.5,369.9 969.9,378.5 958.1,378.1"/><path fill="none" d="M958.6 369.0L970.5 369.9L969.9 378.5L958.1 378.1L958.6 369.0"/><polygon stroke="none" fill="#fbd158" points="961.8,405.2 986.8,406.3 986.8,421.1 961.8,421.1"/><path fill="none" d="M961.8 405.2L986.8 406.3L986.8 421.1L961.8 421.1L961.8 405.2"/><polygon stroke="none" fill="#fbd158" points="998.7,385.7 1008.5,385.0 1008.5,393.3 1002.0,392.2"/><path fill="none" d="M998.7 385.7L1008.5 385.0L1008.5 393.3L1002.0 392.2L998.7 385.7"/><polygon stroke="none" fill="#ffff80" points="981.4,389.6 984.6,392.9 981.4,396.1 978.1,392.9"/><path fill="none" d="M981.4 389.6L984.6 392.9L981.4 396.1L978.1 392.9L981.4 389.6"/><polygon stroke="none" fill="#ffff80" points="987.9,389.6 991.1,392.9 987.9,396.1 984.6,392.9"/><path fill="none" d="M987.9 389.6L991.1 392.9L987.9 396.1L984.6 392.9L987.9 389.6"/><polygon stroke="none" fill="#ffff80" points="984.6,393.1 987.9,396.3 984.6,399.6 981.4,396.3"/><path fill="none" d="M984.6 393.1L987.9 396.3L984.6 399.6L981.4 396.3L984.6 393.1"/><polygon stroke="none" fill="#ffff80" points="994.6,394.8 997.8,398.1 994.6,401.3 991.3,398.1"/><path fill="none" d="M994.6 394.8L997.8 398.1L994.6 401.3L991.3 398.1L994.6 394.8"/><polygon stroke="none" fill="#fbd158" points="967.3,385.3 970.5,388.5 967.3,391.8 964.0,388.5"/><path fill="none" d="M967.3 385.3L970.5 388.5L967.3 391.8L964.0 388.5L967.3 385.3"/><polygon stroke="none" fill="#f0a62e" points="975.9,393.1 979.2,396.3 975.9,399.6 972.7,396.3"/><path fill="none" d="M975.9 393.1L979.2 396.3L975.9 399.6L972.7 396.3L975.9 393.1"/><polygon stroke="none" fill="#f0a62e" points="991.1,393.1 994.4,396.3 991.1,399.6 987.9,396.3"/><path fill="none" d="M991.1 393.1L994.4 396.3L991.1 399.6L987.9 396.3L991.1 393.1"/><polygon stroke="none" fill="#ffff80" points="974.8,386.1 978.1,389.4 974.8,392.6 971.6,389.4"/><path fill="none" d="M974.8 386.1L978.1 389.4L974.8 392.6L971.6 389.4L974.8 386.1"/><polygon stroke="none" fill="#ffff80" points="954.2,390.5 957.5,393.7 954.2,397.0 951.0,393.7"/><path fill="none" d="M954.2 390.5L957.5 393.7L954.2 397.0L951.0 393.7L954.2 390.5"/><polygon stroke="none" fill="#ffff80" points="965.1,380.3 968.3,383.5 965.1,386.8 961.8,383.5"/><path fill="none" d="M965.1 380.3L968.3 383.5L965.1 386.8L961.8 383.5L965.1 380.3"/><polygon stroke="none" fill="#fbd158" points="971.6,383.5 974.8,386.8 971.6,390.0 968.3,386.8"/><path fill="none" d="M971.6 383.5L974.8 386.8L971.6 390.0L968.3 386.8L971.6 383.5"/><polygon stroke="none" fill="#ad5515" points="995.5,382.4 998.7,385.7 995.5,388.9 992.2,385.7"/><path fill="none" d="M995.5 382.4L998.7 385.7L995.5 388.9L992.2 385.7L995.5 382.4"/><polygon stroke="none" fill="#f0a62e" points="985.7,383.5 988.9,386.8 985.7,390.0 982.4,386.8"/><path fill="none" d="M985.7 383.5L988.9 386.8L985.7 390.0L982.4 386.8L985.7 383.5"/><polygon stroke="none" fill="#fbd158" points="978.1,396.5 981.4,399.8 978.1,403.1 974.8,399.8"/><path fill="none" d="M978.1 396.5L981.4 399.8L978.1 403.1L974.8 399.8L978.1 396.5"/><polygon stroke="none" fill="#f0a62e" points="1000.9,392.2 1004.1,395.5 1000.9,398.7 997.6,395.5"/><path fill="none" d="M1000.9 392.2L1004.1 395.5L1000.9 398.7L997.6 395.5L1000.9 392.2"/><polygon stroke="none" fill="#ad5515" points="961.2,390.0 964.2,393.3 962.5,395.9 959.4,392.9"/><path fill="none" d="M961.2 390.0L964.2 393.3L962.5 395.9L959.4 392.9L961.2 390.0"/><polygon stroke="none" fill="#ad5515" points="963.3,398.1 967.3,399.8 965.1,402.4 962.0,400.7"/><path fill="none" d="M963.3 398.1L967.3 399.8L965.1 402.4L962.0 400.7L963.3 398.1"/><polygon stroke="none" fill="#ad5515" points="959.0,373.3 962.0,373.8 961.6,378.1 958.6,377.7"/><path fill="none" d="M959.0 373.3L962.0 373.8L961.6 378.1L958.6 377.7L959.0 373.3"/><polyline fill="none" points="963.3,370.5 962.9,378.1"/><polyline fill="none" points="966.8,370.5 966.4,378.1"/><polyline fill="none" points="958.6,373.8 969.9,374.4"/><polyline fill="none" points="970.5,369.9 978.1,368.3 986.8,374.8 1005.2,377.0"/><polyline fill="none" points="965.1,401.1 954.2,408.5"/><polygon stroke="none" fill="#0a6cfa" points="215.0,518.0 223.9,520.5 225.1,530.7 237.8,540.8 253.0,539.6 261.9,552.2 273.3,558.6 286.0,575.8 288.5,586.4 215.0,586.4"/><path fill="none" d="M215.0 518.0L223.9 520.5L225.1 530.7L237.8 540.8L253.0 539.6L261.9 552.2L273.3 558.6L286.0 575.8L288.5 586.4L215.0 586.4"/><polygon stroke="none" fill="#ffff80" points="312.6,575.8 326.5,560.6 339.2,543.4 346.8,543.4 356.9,533.2 372.1,526.9 388.6,525.6 388.6,538.8 374.7,530.7 356.9,545.4 346.8,543.4 326.5,561.1 316.4,575.8"/><path fill="none" d="M312.6 575.8L326.5 560.6L339.2 543.4L346.8 543.4L356.9 533.2L372.1 526.9L388.6 525.6L388.6 538.8L374.7 530.7L356.9 545.4L346.8 543.4L326.5 561.1L316.4 575.8L312.6 575.8"/><polygon stroke="none" fill="#0a6cfa" points="312.6,575.8 326.5,561.1 346.8,543.4 356.9,545.4 374.7,530.7 388.6,539.6 389.4,543.4 395.4,538.8 399.2,542.1 393.7,559.1 426.6,574.3 432.4,565.7 433.4,575.8 433.4,586.4 311.3,586.4"/><path fill="none" d="M312.6 575.8L326.5 561.1L346.8 543.4L356.9 545.4L374.7 530.7L388.6 539.6L389.4 543.4L395.4 538.8L399.2 542.1L393.7 559.1L426.6 574.3L432.4 565.7L433.4 575.8L433.4 586.4L311.3 586.4L312.6 575.8"/><polygon stroke="none" fill="#ffff80" points="425.3,523.1 435.5,502.8 448.1,495.2 443.1,515.5 450.7,525.6 458.3,510.4 478.6,510.4 478.6,575.8 459.6,574.3 415.2,542.1"/><path fill="none" d="M425.3 523.1L435.5 502.8L448.1 495.2L443.1 515.5L450.7 525.6L458.3 510.4L478.6 510.4M478.6 575.8L459.6 574.3L415.2 542.1L425.3 523.1"/><polygon stroke="none" fill="#fbd158" points="398.7,485.1 425.3,492.7 425.3,523.1 416.5,533.2 402.5,523.1 401.3,512.9 394.9,504.1"/><path fill="none" d="M398.7 485.1L425.3 492.7L425.3 523.1L416.5 533.2L402.5 523.1L401.3 512.9L394.9 504.1L398.7 485.1"/><polyline fill="none" points="377.2,480.0 373.4,492.7 379.7,500.3 372.1,512.9 383.5,510.4 387.3,525.6"/><polyline fill="none" points="388.6,525.6 415.2,542.1 459.6,574.3"/><polyline fill="none" points="426.6,525.6 430.4,543.4 443.1,561.1 458.3,573.8"/><polyline fill="none" points="448.1,520.5 443.1,543.4 453.2,563.6 462.1,574.3"/><polyline fill="none" points="425.3,492.7 475.0,507.9"/><polygon stroke="none" fill="#fbd158" points="481.1,515.5 484.1,515.5 484.1,575.8 481.1,575.8"/><path fill="none" d="M481.1 515.5L484.1 515.5L484.1 575.8L481.1 575.8L481.1 515.5"/><polygon stroke="none" fill="#ffff80" points="475.0,505.3 480.1,508.4 480.8,575.8 475.0,575.8"/><path fill="none" d="M475.0 505.3L480.1 508.4L480.8 575.8L475.0 575.8"/><polyline fill="none" points="479.6,480.0 480.8,575.8"/><polyline fill="none" points="484.1,480.0 484.1,515.5"/><polygon stroke="none" fill="#ffff80" points="485.1,488.9 504.1,491.4 509.2,515.5 500.3,518.0 485.1,514.2"/><path fill="none" d="M485.1 488.9L504.1 491.4L509.2 515.5L500.3 518.0L485.1 514.2L485.1 488.9"/><polygon stroke="none" fill="#ad5515" points="484.6,515.5 500.3,518.0 513.0,524.3 525.7,538.3 537.1,558.6 537.1,575.8 484.6,575.8"/><path fill="none" d="M484.6 515.5L500.3 518.0L513.0 524.3L525.7 538.3L537.1 558.6L537.1 575.8L484.6 575.8L484.6 515.5"/><polygon stroke="none" fill="#ad5515" points="584.0,519.3 609.3,519.3 609.3,547.2 599.2,545.9 594.1,530.7 587.8,525.1 584.0,525.6"/><path fill="none" d="M584.0 519.3L609.3 519.3L609.3 547.2L599.2 545.9L594.1 530.7L587.8 525.1L584.0 525.6L584.0 519.3"/><polygon stroke="none" fill="#ffff80" points="616.9,480.0 738.6,480.0 738.6,570.0 725.9,561.1 718.3,553.5 708.1,543.4 698.0,520.5 687.9,505.3 677.7,496.5 665.1,491.4 639.7,486.3 622.0,482.5"/><path fill="none" d="M738.6 570.0L725.9 561.1L718.3 553.5L708.1 543.4L698.0 520.5L687.9 505.3L677.7 496.5L665.1 491.4L639.7 486.3L622.0 482.5L616.9 480.0"/><polygon stroke="none" fill="#fbd158" points="611.8,480.0 622.0,482.5 639.7,486.3 665.1,491.4 677.7,496.5 687.9,505.3 698.0,520.5 708.1,543.4 718.3,553.5 725.9,561.1 728.4,575.8 613.9,575.8 611.8,556.0"/><path fill="none" d="M611.8 480.0L622.0 482.5L639.7 486.3L665.1 491.4L677.7 496.5L687.9 505.3L698.0 520.5L708.1 543.4L718.3 553.5L725.9 561.1L728.4 575.8L613.9 575.8L611.8 556.0L611.8 480.0"/><polygon stroke="none" fill="#f0a62e" points="725.9,561.1 738.6,570.0 738.6,575.8 728.4,575.8"/><path fill="none" d="M725.9 561.1L738.6 570.0M738.6 575.8L728.4 575.8L725.9 561.1"/><polygon stroke="none" fill="#fbd158" points="548.5,504.1 581.4,505.3 587.8,512.9 558.6,520.5 553.6,512.9"/><path fill="none" d="M548.5 504.1L581.4 505.3L587.8 512.9L558.6 520.5L553.6 512.9L548.5 504.1"/><polygon stroke="none" fill="#fbd158" points="528.2,538.3 540.9,540.8 543.4,548.4 535.8,549.7"/><path fill="none" d="M528.2 538.3L540.9 540.8L543.4 548.4L535.8 549.7L528.2 538.3"/><polygon stroke="none" fill="#ffff80" points="571.3,533.2 582.7,533.2 582.7,542.1 576.4,543.4 571.3,538.3"/><path fill="none" d="M571.3 533.2L582.7 533.2L582.7 542.1L576.4 543.4L571.3 538.3L571.3 533.2"/><polygon stroke="none" fill="#ffff80" points="573.8,566.2 586.5,567.4 587.8,551.0 590.3,551.0 590.3,575.8 572.6,575.8"/><path fill="none" d="M573.8 566.2L586.5 567.4L587.8 551.0L590.3 551.0L590.3 575.8L572.6 575.8L573.8 566.2"/><polygon stroke="none" fill="#ffff80" points="532.0,551.0 537.1,552.2 538.4,561.1 534.6,556.0"/><path fill="none" d="M532.0 551.0L537.1 552.2L538.4 561.1L534.6 556.0L532.0 551.0"/><polygon stroke="none" fill="#ad5515" points="511.7,480.0 516.1,480.0 516.1,487.6 511.7,487.6"/><path fill="none" d="M516.1 480.0L516.1 487.6L511.7 487.6L511.7 480.0"/><polyline fill="none" points="561.2,480.0 561.2,493.9 590.3,493.9 590.3,480.0"/><polyline fill="none" points="504.1,491.4 525.7,505.3 534.6,525.6 534.6,540.8 543.4,548.4 606.8,547.2 613.1,556.0 614.4,575.8"/><polyline fill="none" points="538.4,551.0 586.5,551.0 584.0,566.2"/><polyline fill="none" points="538.4,551.0 546.0,575.8"/><polyline fill="none" points="542.2,495.2 551.0,505.3 558.6,525.6 553.6,543.4"/><polyline fill="none" points="558.6,520.5 584.0,519.3"/><polyline fill="none" points="558.6,525.6 571.3,538.3 562.4,537.0 558.6,543.4 581.4,543.4"/><polyline fill="none" points="584.0,525.6 582.7,551.0"/><polyline fill="none" points="585.2,537.0 591.6,539.6 594.1,546.4"/><polyline fill="none" points="585.2,540.8 589.0,542.8 590.3,546.4"/><polyline fill="none" points="587.8,525.1 594.1,530.7 599.2,545.9"/><polyline fill="none" points="609.3,480.0 609.3,519.3"/><polyline fill="none" points="665.6,485.6 668.1,487.6 667.1,489.6 665.1,487.6 665.6,485.6"/><polygon stroke="none" fill="#ffff80" points="735.0,480.0 781.9,480.0 782.6,493.9 767.9,497.7 750.2,506.6 775.5,510.4 782.6,509.1 781.9,575.8 742.6,575.8 743.9,570.0 738.8,567.4 735.0,568.7"/><path fill="none" d="M781.9 480.0L782.6 493.9L767.9 497.7L750.2 506.6L775.5 510.4L782.6 509.1L781.9 575.8L742.6 575.8L743.9 570.0L738.8 567.4L735.0 568.7"/><polygon stroke="none" fill="#ffff80" points="782.6,509.1 792.0,506.6 798.4,500.3 806.0,500.3 808.5,514.2 800.9,530.7 781.9,546.4"/><path fill="none" d="M782.6 509.1L792.0 506.6L798.4 500.3L806.0 500.3L808.5 514.2L800.9 530.7L781.9 546.4L782.6 509.1"/><polygon stroke="none" fill="#fbd158" points="782.6,493.9 803.4,486.3 816.1,485.1 827.5,481.3 831.3,490.1 828.8,499.0 818.6,506.6 808.5,514.2 806.0,500.3 798.4,500.3 792.0,506.6 782.6,509.1"/><path fill="none" d="M782.6 493.9L803.4 486.3L816.1 485.1L827.5 481.3L831.3 490.1L828.8 499.0L818.6 506.6L808.5 514.2L806.0 500.3L798.4 500.3L792.0 506.6L782.6 509.1L782.6 493.9"/><polygon stroke="none" fill="#ffff80" points="946.6,480.0 1013.8,480.0 1013.8,672.6 936.5,672.6 936.5,580.1 959.3,580.1 963.1,571.2 977.0,558.6 978.3,548.4 970.7,528.2 960.5,507.9 961.8,492.7 955.5,482.5"/><path fill="none" d="M936.5 672.6L936.5 580.1L959.3 580.1L963.1 571.2L977.0 558.6L978.3 548.4L970.7 528.2L960.5 507.9L961.8 492.7L955.5 482.5L946.6 480.0"/><polygon stroke="none" fill="#ffff80" points="955.0,482.0 960.5,492.7 959.3,507.9 969.4,528.2 966.9,529.4 956.0,510.4 955.5,495.2"/><path fill="none" d="M955.0 482.0L960.5 492.7L959.3 507.9L969.4 528.2L966.9 529.4L956.0 510.4L955.5 495.2L955.0 482.0"/><polygon stroke="none" fill="#ad5515" points="1013.8,537.0 1004.9,539.6 996.0,543.9 995.0,554.0 984.9,561.1 982.8,569.0 970.9,578.6 966.9,602.9 973.0,621.9 980.6,631.0 1004.9,630.0 1013.8,630.0"/><path fill="none" d="M996.0 543.9L995.0 554.0L984.9 561.1L982.8 569.0L970.9 578.6L966.9 602.9L973.0 621.9L980.6 631.0L1004.9 630.0"/><polygon stroke="none" fill="#ad5515" points="933.9,485.1 944.1,487.6 942.8,492.7 932.7,504.1"/><path fill="none" d="M933.9 485.1L944.1 487.6L942.8 492.7L932.7 504.1L933.9 485.1"/><polygon stroke="none" fill="#fbd158" points="926.3,480.0 932.7,480.0 932.2,505.3 925.1,515.5"/><path fill="none" d="M932.7 480.0L932.2 505.3L925.1 515.5L926.3 480.0"/><polygon stroke="none" fill="#ad5515" points="909.9,480.0 933.9,480.0 932.7,482.5 912.4,482.0"/><path fill="none" d="M933.9 480.0L932.7 482.5L912.4 482.0L909.9 480.0"/><ellipse fill="#ffff80" cx="897.2" cy="487.6" rx="3.5" ry="4.6"/><polyline fill="none" points="963.1,576.3 958.0,591.5 960.5,611.8 968.1,629.5 975.8,639.7 995.0,634.6 1013.8,632.8"/><polyline fill="none" points="864.2,575.8 866.8,558.6 876.9,551.0 897.2,543.4 909.9,535.8 912.4,525.6 925.1,515.5"/><polyline fill="none" points="781.9,546.4 780.6,575.8"/><rect x="408.2" y="431.8" width="5.6" height="5.6" fill="#ffff80" stroke-width="0.7" transform="rotate(17 411.0 434.6)"/><rect x="406.5" y="437.4" width="5.6" height="5.6" fill="#fbd158" stroke-width="0.7" transform="rotate(17 409.3 440.2)"/><rect x="404.8" y="442.9" width="5.6" height="5.6" fill="#fbd158" stroke-width="0.7" transform="rotate(17 407.6 445.7)"/><rect x="403.1" y="448.5" width="5.6" height="5.6" fill="#ffff80" stroke-width="0.7" transform="rotate(17 405.9 451.3)"/><rect x="413.7" y="433.5" width="5.6" height="5.6" fill="#f0a62e" stroke-width="0.7" transform="rotate(17 416.5 436.3)"/><rect x="412.0" y="439.1" width="5.6" height="5.6" fill="#fbd158" stroke-width="0.7" transform="rotate(17 414.8 441.9)"/><rect x="410.3" y="444.6" width="5.6" height="5.6" fill="#fbd158" stroke-width="0.7" transform="rotate(17 413.1 447.4)"/><rect x="408.6" y="450.2" width="5.6" height="5.6" fill="#f0a62e" stroke-width="0.7" transform="rotate(17 411.4 453.0)"/><rect x="419.3" y="435.2" width="5.6" height="5.6" fill="#fbd158" stroke-width="0.7" transform="rotate(17 422.1 438.0)"/><rect x="417.6" y="440.8" width="5.6" height="5.6" fill="#ffff80" stroke-width="0.7" transform="rotate(17 420.4 443.6)"/><rect x="415.9" y="446.3" width="5.6" height="5.6" fill="#fbd158" stroke-width="0.7" transform="rotate(17 418.7 449.1)"/><rect x="414.2" y="451.9" width="5.6" height="5.6" fill="#ffff80" stroke-width="0.7" transform="rotate(17 417.0 454.7)"/><rect x="424.8" y="436.9" width="5.6" height="5.6" fill="#f0a62e" stroke-width="0.7" transform="rotate(17 427.6 439.7)"/><rect x="423.1" y="442.5" width="5.6" height="5.6" fill="#fbd158" stroke-width="0.7" transform="rotate(17 425.9 445.3)"/><rect x="421.4" y="448.0" width="5.6" height="5.6" fill="#f0a62e" stroke-width="0.7" transform="rotate(17 424.2 450.8)"/><rect x="419.7" y="453.6" width="5.6" height="5.6" fill="#fbd158" stroke-width="0.7" transform="rotate(17 422.5 456.4)"/><rect x="430.4" y="438.6" width="5.6" height="5.6" fill="#ffff80" stroke-width="0.7" transform="rotate(17 433.2 441.4)"/><rect x="428.7" y="444.2" width="5.6" height="5.6" fill="#ffff80" stroke-width="0.7" transform="rotate(17 431.5 447.0)"/><rect x="427.0" y="449.7" width="5.6" height="5.6" fill="#f0a62e" stroke-width="0.7" transform="rotate(17 429.8 452.5)"/><rect x="425.3" y="455.3" width="5.6" height="5.6" fill="#fbd158" stroke-width="0.7" transform="rotate(17 428.1 458.1)"/><rect x="435.9" y="440.3" width="5.6" height="5.6" fill="#fbd158" stroke-width="0.7" transform="rotate(17 438.7 443.1)"/><rect x="434.2" y="445.9" width="5.6" height="5.6" fill="#f0a62e" stroke-width="0.7" transform="rotate(17 437.0 448.7)"/><rect x="432.5" y="451.4" width="5.6" height="5.6" fill="#ad5515" stroke-width="0.7" transform="rotate(17 435.3 454.2)"/><rect x="430.8" y="457.0" width="5.6" height="5.6" fill="#fbd158" stroke-width="0.7" transform="rotate(17 433.6 459.8)"/><rect x="449.9" y="414.3" width="5.6" height="5.6" fill="#fbd158" stroke-width="0.7" transform="rotate(17 452.7 417.1)"/><rect x="448.2" y="419.8" width="5.6" height="5.6" fill="#f0a62e" stroke-width="0.7" transform="rotate(17 451.0 422.6)"/><rect x="446.5" y="425.4" width="5.6" height="5.6" fill="#f0a62e" stroke-width="0.7" transform="rotate(17 449.3 428.2)"/><rect x="444.8" y="430.9" width="5.6" height="5.6" fill="#ffff80" stroke-width="0.7" transform="rotate(17 447.6 433.7)"/><rect x="443.1" y="436.5" width="5.6" height="5.6" fill="#ffff80" stroke-width="0.7" transform="rotate(17 445.9 439.3)"/><rect x="441.5" y="442.0" width="5.6" height="5.6" fill="#f0a62e" stroke-width="0.7" transform="rotate(17 444.3 444.8)"/><rect x="439.8" y="447.6" width="5.6" height="5.6" fill="#f0a62e" stroke-width="0.7" transform="rotate(17 442.6 450.4)"/><rect x="438.1" y="453.1" width="5.6" height="5.6" fill="#ad5515" stroke-width="0.7" transform="rotate(17 440.9 455.9)"/><rect x="436.4" y="458.7" width="5.6" height="5.6" fill="#fbd158" stroke-width="0.7" transform="rotate(17 439.2 461.5)"/><rect x="434.7" y="464.2" width="5.6" height="5.6" fill="#f0a62e" stroke-width="0.7" transform="rotate(17 437.5 467.0)"/><rect x="433.0" y="469.8" width="5.6" height="5.6" fill="#ffff80" stroke-width="0.7" transform="rotate(17 435.8 472.6)"/><rect x="431.3" y="475.3" width="5.6" height="5.6" fill="#f0a62e" stroke-width="0.7" transform="rotate(17 434.1 478.1)"/><rect x="429.6" y="480.8" width="5.6" height="5.6" fill="#f0a62e" stroke-width="0.7" transform="rotate(17 432.4 483.6)"/><rect x="427.9" y="486.4" width="5.6" height="5.6" fill="#ffff80" stroke-width="0.7" transform="rotate(17 430.7 489.2)"/><rect x="426.2" y="491.9" width="5.6" height="5.6" fill="#ffff80" stroke-width="0.7" transform="rotate(17 429.0 494.7)"/><rect x="455.5" y="416.0" width="5.6" height="5.6" fill="#f0a62e" stroke-width="0.7" transform="rotate(17 458.3 418.8)"/><rect x="453.8" y="421.5" width="5.6" height="5.6" fill="#fbd158" stroke-width="0.7" transform="rotate(17 456.6 424.3)"/><rect x="452.1" y="427.1" width="5.6" height="5.6" fill="#ffff80" stroke-width="0.7" transform="rotate(17 454.9 429.9)"/><rect x="450.4" y="432.6" width="5.6" height="5.6" fill="#f0a62e" stroke-width="0.7" transform="rotate(17 453.2 435.4)"/><rect x="448.7" y="438.2" width="5.6" height="5.6" fill="#f0a62e" stroke-width="0.7" transform="rotate(17 451.5 441.0)"/><rect x="447.0" y="443.7" width="5.6" height="5.6" fill="#ffff80" stroke-width="0.7" transform="rotate(17 449.8 446.5)"/><rect x="445.3" y="449.3" width="5.6" height="5.6" fill="#f0a62e" stroke-width="0.7" transform="rotate(17 448.1 452.1)"/><rect x="443.6" y="454.8" width="5.6" height="5.6" fill="#f0a62e" stroke-width="0.7" transform="rotate(17 446.4 457.6)"/><rect x="441.9" y="460.4" width="5.6" height="5.6" fill="#fbd158" stroke-width="0.7" transform="rotate(17 444.7 463.2)"/><rect x="440.2" y="465.9" width="5.6" height="5.6" fill="#fbd158" stroke-width="0.7" transform="rotate(17 443.0 468.7)"/><rect x="438.5" y="471.4" width="5.6" height="5.6" fill="#fbd158" stroke-width="0.7" transform="rotate(17 441.3 474.2)"/><rect x="436.8" y="477.0" width="5.6" height="5.6" fill="#f0a62e" stroke-width="0.7" transform="rotate(17 439.6 479.8)"/><rect x="435.1" y="482.5" width="5.6" height="5.6" fill="#f0a62e" stroke-width="0.7" transform="rotate(17 437.9 485.3)"/><rect x="433.4" y="488.1" width="5.6" height="5.6" fill="#fbd158" stroke-width="0.7" transform="rotate(17 436.2 490.9)"/><rect x="431.7" y="493.6" width="5.6" height="5.6" fill="#fbd158" stroke-width="0.7" transform="rotate(17 434.5 496.4)"/><rect x="461.0" y="417.7" width="5.6" height="5.6" fill="#ffff80" stroke-width="0.7" transform="rotate(17 463.8 420.5)"/><rect x="459.3" y="423.2" width="5.6" height="5.6" fill="#f0a62e" stroke-width="0.7" transform="rotate(17 462.1 426.0)"/><rect x="457.6" y="428.8" width="5.6" height="5.6" fill="#ffff80" stroke-width="0.7" transform="rotate(17 460.4 431.6)"/><rect x="455.9" y="434.3" width="5.6" height="5.6" fill="#ffff80" stroke-width="0.7" transform="rotate(17 458.7 437.1)"/><rect x="454.2" y="439.9" width="5.6" height="5.6" fill="#f0a62e" stroke-width="0.7" transform="rotate(17 457.0 442.7)"/><rect x="452.5" y="445.4" width="5.6" height="5.6" fill="#f0a62e" stroke-width="0.7" transform="rotate(17 455.3 448.2)"/><rect x="450.8" y="451.0" width="5.6" height="5.6" fill="#ad5515" stroke-width="0.7" transform="rotate(17 453.6 453.8)"/><rect x="449.2" y="456.5" width="5.6" height="5.6" fill="#f0a62e" stroke-width="0.7" transform="rotate(17 452.0 459.3)"/><rect x="447.5" y="462.1" width="5.6" height="5.6" fill="#fbd158" stroke-width="0.7" transform="rotate(17 450.3 464.9)"/><rect x="445.8" y="467.6" width="5.6" height="5.6" fill="#f0a62e" stroke-width="0.7" transform="rotate(17 448.6 470.4)"/><rect x="444.1" y="473.1" width="5.6" height="5.6" fill="#fbd158" stroke-width="0.7" transform="rotate(17 446.9 475.9)"/><rect x="442.4" y="478.7" width="5.6" height="5.6" fill="#fbd158" stroke-width="0.7" transform="rotate(17 445.2 481.5)"/><rect x="440.7" y="484.2" width="5.6" height="5.6" fill="#f0a62e" stroke-width="0.7" transform="rotate(17 443.5 487.0)"/><rect x="439.0" y="489.8" width="5.6" height="5.6" fill="#fbd158" stroke-width="0.7" transform="rotate(17 441.8 492.6)"/><rect x="437.3" y="495.3" width="5.6" height="5.6" fill="#fbd158" stroke-width="0.7" transform="rotate(17 440.1 498.1)"/><rect x="466.6" y="419.4" width="5.6" height="5.6" fill="#f0a62e" stroke-width="0.7" transform="rotate(17 469.4 422.2)"/><rect x="464.9" y="424.9" width="5.6" height="5.6" fill="#fbd158" stroke-width="0.7" transform="rotate(17 467.7 427.7)"/><rect x="463.2" y="430.5" width="5.6" height="5.6" fill="#fbd158" stroke-width="0.7" transform="rotate(17 466.0 433.3)"/><rect x="461.5" y="436.0" width="5.6" height="5.6" fill="#fbd158" stroke-width="0.7" transform="rotate(17 464.3 438.8)"/><rect x="459.8" y="441.6" width="5.6" height="5.6" fill="#ad5515" stroke-width="0.7" transform="rotate(17 462.6 444.4)"/><rect x="458.1" y="447.1" width="5.6" height="5.6" fill="#ffff80" stroke-width="0.7" transform="rotate(17 460.9 449.9)"/><rect x="456.4" y="452.7" width="5.6" height="5.6" fill="#ffff80" stroke-width="0.7" transform="rotate(17 459.2 455.5)"/><rect x="454.7" y="458.2" width="5.6" height="5.6" fill="#f0a62e" stroke-width="0.7" transform="rotate(17 457.5 461.0)"/><rect x="453.0" y="463.7" width="5.6" height="5.6" fill="#f0a62e" stroke-width="0.7" transform="rotate(17 455.8 466.5)"/><rect x="451.3" y="469.3" width="5.6" height="5.6" fill="#ffff80" stroke-width="0.7" transform="rotate(17 454.1 472.1)"/><rect x="449.6" y="474.8" width="5.6" height="5.6" fill="#ad5515" stroke-width="0.7" transform="rotate(17 452.4 477.6)"/><rect x="447.9" y="480.4" width="5.6" height="5.6" fill="#fbd158" stroke-width="0.7" transform="rotate(17 450.7 483.2)"/><rect x="446.2" y="485.9" width="5.6" height="5.6" fill="#f0a62e" stroke-width="0.7" transform="rotate(17 449.0 488.7)"/><rect x="444.5" y="491.5" width="5.6" height="5.6" fill="#f0a62e" stroke-width="0.7" transform="rotate(17 447.3 494.3)"/><rect x="442.8" y="497.0" width="5.6" height="5.6" fill="#ffff80" stroke-width="0.7" transform="rotate(17 445.6 499.8)"/><rect x="472.1" y="421.1" width="5.6" height="5.6" fill="#f0a62e" stroke-width="0.7" transform="rotate(17 474.9 423.9)"/><rect x="470.4" y="426.6" width="5.6" height="5.6" fill="#f0a62e" stroke-width="0.7" transform="rotate(17 473.2 429.4)"/><rect x="468.7" y="432.2" width="5.6" height="5.6" fill="#fbd158" stroke-width="0.7" transform="rotate(17 471.5 435.0)"/><rect x="467.0" y="437.7" width="5.6" height="5.6" fill="#f0a62e" stroke-width="0.7" transform="rotate(17 469.8 440.5)"/><rect x="465.3" y="443.3" width="5.6" height="5.6" fill="#f0a62e" stroke-width="0.7" transform="rotate(17 468.1 446.1)"/><rect x="463.6" y="448.8" width="5.6" height="5.6" fill="#fbd158" stroke-width="0.7" transform="rotate(17 466.4 451.6)"/><rect x="461.9" y="454.3" width="5.6" height="5.6" fill="#fbd158" stroke-width="0.7" transform="rotate(17 464.7 457.1)"/><rect x="460.2" y="459.9" width="5.6" height="5.6" fill="#f0a62e" stroke-width="0.7" transform="rotate(17 463.0 462.7)"/><rect x="458.6" y="465.4" width="5.6" height="5.6" fill="#f0a62e" stroke-width="0.7" transform="rotate(17 461.4 468.2)"/><rect x="456.9" y="471.0" width="5.6" height="5.6" fill="#fbd158" stroke-width="0.7" transform="rotate(17 459.7 473.8)"/><rect x="455.2" y="476.5" width="5.6" height="5.6" fill="#ffff80" stroke-width="0.7" transform="rotate(17 458.0 479.3)"/><rect x="453.5" y="482.1" width="5.6" height="5.6" fill="#f0a62e" stroke-width="0.7" transform="rotate(17 456.3 484.9)"/><rect x="451.8" y="487.6" width="5.6" height="5.6" fill="#ffff80" stroke-width="0.7" transform="rotate(17 454.6 490.4)"/><rect x="450.1" y="493.2" width="5.6" height="5.6" fill="#fbd158" stroke-width="0.7" transform="rotate(17 452.9 496.0)"/><rect x="448.4" y="498.7" width="5.6" height="5.6" fill="#ffff80" stroke-width="0.7" transform="rotate(17 451.2 501.5)"/><rect x="477.7" y="422.8" width="5.6" height="5.6" fill="#ffff80" stroke-width="0.7" transform="rotate(17 480.5 425.6)"/><rect x="476.0" y="428.3" width="5.6" height="5.6" fill="#f0a62e" stroke-width="0.7" transform="rotate(17 478.8 431.1)"/><rect x="474.3" y="433.9" width="5.6" height="5.6" fill="#fbd158" stroke-width="0.7" transform="rotate(17 477.1 436.7)"/><rect x="472.6" y="439.4" width="5.6" height="5.6" fill="#f0a62e" stroke-width="0.7" transform="rotate(17 475.4 442.2)"/><rect x="470.9" y="445.0" width="5.6" height="5.6" fill="#fbd158" stroke-width="0.7" transform="rotate(17 473.7 447.8)"/><rect x="469.2" y="450.5" width="5.6" height="5.6" fill="#fbd158" stroke-width="0.7" transform="rotate(17 472.0 453.3)"/><rect x="467.5" y="456.0" width="5.6" height="5.6" fill="#ffff80" stroke-width="0.7" transform="rotate(17 470.3 458.8)"/><rect x="465.8" y="461.6" width="5.6" height="5.6" fill="#ffff80" stroke-width="0.7" transform="rotate(17 468.6 464.4)"/><rect x="464.1" y="467.1" width="5.6" height="5.6" fill="#fbd158" stroke-width="0.7" transform="rotate(17 466.9 469.9)"/><rect x="462.4" y="472.7" width="5.6" height="5.6" fill="#ffff80" stroke-width="0.7" transform="rotate(17 465.2 475.5)"/><rect x="460.7" y="478.2" width="5.6" height="5.6" fill="#fbd158" stroke-width="0.7" transform="rotate(17 463.5 481.0)"/><rect x="459.0" y="483.8" width="5.6" height="5.6" fill="#f0a62e" stroke-width="0.7" transform="rotate(17 461.8 486.6)"/><rect x="457.3" y="489.3" width="5.6" height="5.6" fill="#fbd158" stroke-width="0.7" transform="rotate(17 460.1 492.1)"/><rect x="455.6" y="494.9" width="5.6" height="5.6" fill="#ffff80" stroke-width="0.7" transform="rotate(17 458.4 497.7)"/><rect x="453.9" y="500.4" width="5.6" height="5.6" fill="#ffff80" stroke-width="0.7" transform="rotate(17 456.7 503.2)"/><rect x="483.2" y="424.5" width="5.6" height="5.6" fill="#f0a62e" stroke-width="0.7" transform="rotate(17 486.0 427.3)"/><rect x="481.5" y="430.0" width="5.6" height="5.6" fill="#ffff80" stroke-width="0.7" transform="rotate(17 484.3 432.8)"/><rect x="479.8" y="435.6" width="5.6" height="5.6" fill="#ffff80" stroke-width="0.7" transform="rotate(17 482.6 438.4)"/><rect x="478.1" y="441.1" width="5.6" height="5.6" fill="#ffff80" stroke-width="0.7" transform="rotate(17 480.9 443.9)"/><rect x="476.4" y="446.6" width="5.6" height="5.6" fill="#fbd158" stroke-width="0.7" transform="rotate(17 479.2 449.4)"/><rect x="474.7" y="452.2" width="5.6" height="5.6" fill="#fbd158" stroke-width="0.7" transform="rotate(17 477.5 455.0)"/><rect x="473.0" y="457.7" width="5.6" height="5.6" fill="#ffff80" stroke-width="0.7" transform="rotate(17 475.8 460.5)"/><rect x="471.3" y="463.3" width="5.6" height="5.6" fill="#ad5515" stroke-width="0.7" transform="rotate(17 474.1 466.1)"/><rect x="469.6" y="468.8" width="5.6" height="5.6" fill="#fbd158" stroke-width="0.7" transform="rotate(17 472.4 471.6)"/><rect x="467.9" y="474.4" width="5.6" height="5.6" fill="#f0a62e" stroke-width="0.7" transform="rotate(17 470.7 477.2)"/><rect x="466.3" y="479.9" width="5.6" height="5.6" fill="#fbd158" stroke-width="0.7" transform="rotate(17 469.1 482.7)"/><rect x="464.6" y="485.5" width="5.6" height="5.6" fill="#f0a62e" stroke-width="0.7" transform="rotate(17 467.4 488.3)"/><rect x="462.9" y="491.0" width="5.6" height="5.6" fill="#ffff80" stroke-width="0.7" transform="rotate(17 465.7 493.8)"/><rect x="461.2" y="496.6" width="5.6" height="5.6" fill="#f0a62e" stroke-width="0.7" transform="rotate(17 464.0 499.4)"/><rect x="459.5" y="502.1" width="5.6" height="5.6" fill="#ffff80" stroke-width="0.7" transform="rotate(17 462.3 504.9)"/><rect x="480.3" y="453.9" width="5.6" height="5.6" fill="#f0a62e" stroke-width="0.7" transform="rotate(17 483.1 456.7)"/><rect x="478.6" y="459.4" width="5.6" height="5.6" fill="#f0a62e" stroke-width="0.7" transform="rotate(17 481.4 462.2)"/><rect x="476.9" y="465.0" width="5.6" height="5.6" fill="#ffff80" stroke-width="0.7" transform="rotate(17 479.7 467.8)"/><rect x="475.2" y="470.5" width="5.6" height="5.6" fill="#f0a62e" stroke-width="0.7" transform="rotate(17 478.0 473.3)"/><rect x="485.8" y="455.6" width="5.6" height="5.6" fill="#ffff80" stroke-width="0.7" transform="rotate(17 488.6 458.4)"/><rect x="484.1" y="461.1" width="5.6" height="5.6" fill="#f0a62e" stroke-width="0.7" transform="rotate(17 486.9 463.9)"/><rect x="482.4" y="466.7" width="5.6" height="5.6" fill="#fbd158" stroke-width="0.7" transform="rotate(17 485.2 469.5)"/><rect x="480.7" y="472.2" width="5.6" height="5.6" fill="#fbd158" stroke-width="0.7" transform="rotate(17 483.5 475.0)"/><rect x="491.4" y="457.3" width="5.6" height="5.6" fill="#fbd158" stroke-width="0.7" transform="rotate(17 494.2 460.1)"/><rect x="489.7" y="462.8" width="5.6" height="5.6" fill="#f0a62e" stroke-width="0.7" transform="rotate(17 492.5 465.6)"/><rect x="488.0" y="468.4" width="5.6" height="5.6" fill="#fbd158" stroke-width="0.7" transform="rotate(17 490.8 471.2)"/><rect x="486.3" y="473.9" width="5.6" height="5.6" fill="#fbd158" stroke-width="0.7" transform="rotate(17 489.1 476.7)"/><rect x="496.9" y="459.0" width="5.6" height="5.6" fill="#f0a62e" stroke-width="0.7" transform="rotate(17 499.7 461.8)"/><rect x="495.2" y="464.5" width="5.6" height="5.6" fill="#f0a62e" stroke-width="0.7" transform="rotate(17 498.0 467.3)"/><rect x="493.5" y="470.1" width="5.6" height="5.6" fill="#fbd158" stroke-width="0.7" transform="rotate(17 496.3 472.9)"/><rect x="491.8" y="475.6" width="5.6" height="5.6" fill="#f0a62e" stroke-width="0.7" transform="rotate(17 494.6 478.4)"/><rect x="502.5" y="460.7" width="5.6" height="5.6" fill="#fbd158" stroke-width="0.7" transform="rotate(17 505.3 463.5)"/><rect x="500.8" y="466.2" width="5.6" height="5.6" fill="#ffff80" stroke-width="0.7" transform="rotate(17 503.6 469.0)"/><rect x="499.1" y="471.8" width="5.6" height="5.6" fill="#fbd158" stroke-width="0.7" transform="rotate(17 501.9 474.6)"/><rect x="497.4" y="477.3" width="5.6" height="5.6" fill="#f0a62e" stroke-width="0.7" transform="rotate(17 500.2 480.1)"/><rect x="508.0" y="462.4" width="5.6" height="5.6" fill="#fbd158" stroke-width="0.7" transform="rotate(17 510.8 465.2)"/><rect x="506.3" y="467.9" width="5.6" height="5.6" fill="#f0a62e" stroke-width="0.7" transform="rotate(17 509.1 470.7)"/><rect x="504.6" y="473.5" width="5.6" height="5.6" fill="#fbd158" stroke-width="0.7" transform="rotate(17 507.4 476.3)"/><rect x="502.9" y="479.0" width="5.6" height="5.6" fill="#f0a62e" stroke-width="0.7" transform="rotate(17 505.7 481.8)"/><polyline fill="none" points="439.2,412.4 447.0,402.1 462.4,398.2 475.3,403.4 477.3,417.6 465.0,425.3 447.0,422.7 439.2,412.4"/></g></svg></div>
<div class="a" style="left:1005px;top:148px;width:17px;height:519px;background-color:#fff;background-image:linear-gradient(45deg,#ece9d8 25%,transparent 25%,transparent 75%,#ece9d8 75%),linear-gradient(45deg,#ece9d8 25%,transparent 25%,transparent 75%,#ece9d8 75%);background-size:2px 2px;background-position:0 0,1px 1px"></div>
<div class="a" style="left:219px;top:667px;width:786px;height:17px;background-color:#fff;background-image:linear-gradient(45deg,#ece9d8 25%,transparent 25%,transparent 75%,#ece9d8 75%),linear-gradient(45deg,#ece9d8 25%,transparent 25%,transparent 75%,#ece9d8 75%);background-size:2px 2px;background-position:0 0,1px 1px"></div>
<div class="a" style="left:1005px;top:667px;width:17px;height:17px;background:#fff"></div>
<div class="a" style="left:1005px;top:148px;width:17px;height:17px;background:#ece9d8;border:1px solid #ece9d8;border-right-color:#716f64;border-bottom-color:#716f64"><div class="a" style="left:0;top:0;right:0;bottom:0;border:1px solid #fff;border-right-color:#aca899;border-bottom-color:#aca899"></div></div><div class="a" style="left:1009px;top:153px;border:4px solid transparent;border-bottom:4px solid #000;border-top:0"></div>
<div class="a" style="left:1005px;top:650px;width:17px;height:17px;background:#ece9d8;border:1px solid #ece9d8;border-right-color:#716f64;border-bottom-color:#716f64"><div class="a" style="left:0;top:0;right:0;bottom:0;border:1px solid #fff;border-right-color:#aca899;border-bottom-color:#aca899"></div></div><div class="a" style="left:1009px;top:656px;border:4px solid transparent;border-top:4px solid #000;border-bottom:0"></div>
<div class="a" style="left:1005px;top:352px;width:17px;height:24px;background:#ece9d8;border:1px solid #ece9d8;border-right-color:#716f64;border-bottom-color:#716f64"><div class="a" style="left:0;top:0;right:0;bottom:0;border:1px solid #fff;border-right-color:#aca899;border-bottom-color:#aca899"></div></div>
<div class="a" style="left:989px;top:667px;width:17px;height:17px;background:#ece9d8;border:1px solid #ece9d8;border-right-color:#716f64;border-bottom-color:#716f64"><div class="a" style="left:0;top:0;right:0;bottom:0;border:1px solid #fff;border-right-color:#aca899;border-bottom-color:#aca899"></div></div><div class="a" style="left:995px;top:671px;border:4px solid transparent;border-left:4px solid #000;border-right:0"></div>
<div class="vl" style="left:1023px;top:28px;height:690px;background:#d8d4c4"></div>
<div class="a" style="left:1024px;top:0;width:4px;height:148px;background:#d4e2fa"></div>
<div class="a" style="left:1026px;top:50px;width:2px;height:98px;background:#86b0f2;border-radius:2px 0 0 0"></div>
<div class="a" style="left:1024px;top:148px;width:4px;height:586px;background:#7b98d2"></div>
<div class="a" style="left:1026px;top:415px;width:2px;height:95px;background:#cfdccc"></div>
<div class="a" style="left:1026px;top:510px;width:2px;height:155px;background:#c87838"></div>
<div class="hl" style="left:936px;top:714px;width:88px;background:#aca899"></div>
<div class="hl" style="left:936px;top:715px;width:88px;height:2px;background:#fff"></div>
<div class="hl" style="left:936px;top:718px;width:86px;background:#aca899"></div>
<div class="vl" style="left:1022px;top:719px;height:15px;background:#fff"></div>
<div class="a" style="left:0;top:734px;width:1028px;height:4px;background:#3a80f0"></div>
<div class="a" style="left:65px;top:576px;width:871px;height:160px;background:#0054e3;border-radius:8px 8px 0 0"></div>
<div class="a" style="left:65px;top:576px;width:871px;height:30px;border-radius:8px 8px 0 0;background:linear-gradient(#0a5fe8 0,#2f8cff 5%,#1c82ff 12%,#0a6ffc 22%,#0262ee 40%,#0058e6 60%,#0054e3 78%,#0055eb 90%,#0560f0 96%,#0348c8 100%)"></div>
<div class="a" style="left:65px;top:606px;width:5px;height:128px;background:linear-gradient(90deg,#0030c0,#0a50e8 40%,#1060f0)"></div>
<div class="a" style="left:931px;top:606px;width:5px;height:128px;background:linear-gradient(90deg,#1060f0,#0a50e8 60%,#0030c0)"></div>
<div class="a" style="left:70px;top:606px;width:861px;height:128px;background:#ece9d8"></div>
<svg style="left:73px;top:587px" width="12" height="11" viewBox="0 0 12 11"><rect x="0.5" y="0.5" width="11" height="10" fill="#fff" stroke="#000"/><rect x="0.5" y="0.5" width="11" height="2.5" fill="#000"/><path d="M0.5 5.5 H11.5 M0.5 8 H11.5 M4.2 3 V10.5 M8 3 V10.5" stroke="#000" stroke-width=".9"/></svg>
<div class="a tt" style="left:91px;top:586px;letter-spacing:-.15px">Attributes of census_demographics</div>
<div class="wb" style="left:863px;top:582px"><div class="a" style="left:4px;top:12px;width:8px;height:3px;background:#fff"></div></div>
<div class="wb" style="left:886px;top:582px"><div class="a" style="left:4px;top:4px;width:11px;height:11px;border:1px solid #fff;border-top-width:3px"></div></div>
<div class="wb x" style="left:909px;top:582px"><svg style="left:0;top:0" width="19" height="19" viewBox="0 0 19 19"><path d="M5 5 L14 14 M14 5 L5 14" stroke="#fff" stroke-width="2.2"/></svg></div>
<div class="a" style="left:71px;top:607px;width:859px;height:107px;border:1px solid #aca899;border-right-color:#fff;border-bottom-color:#fff"></div>
<div class="a" style="left:72px;top:608px;width:857px;height:105px;border:1px solid #716f64;border-right-color:#ece9d8;border-bottom-color:#ece9d8;background:#fff"></div>
<div class="a" style="left:73px;top:609px;width:839px;height:20px;background:#ece9d8"></div>
<div class="a" style="left:73px;top:609px;width:14px;height:87px;background:#ece9d8"></div>
<div class="hl" style="left:73px;top:628px;width:839px;background:#000"></div>
<div class="hl" style="left:73px;top:612px;width:839px;background:#aca899"></div>
<div class="vl" style="left:87px;top:613px;height:83px;background:#000"></div>
<div class="hl" style="left:73px;top:644px;width:15px;background:#000"></div>
<div class="vl" style="left:74px;top:629px;height:15px;background:#fff"></div>
<div class="hl" style="left:74px;top:629px;width:13px;background:#fff"></div>
<div class="hl" style="left:73px;top:660px;width:15px;background:#000"></div>
<div class="vl" style="left:74px;top:645px;height:15px;background:#fff"></div>
<div class="hl" style="left:74px;top:645px;width:13px;background:#fff"></div>
<div class="hl" style="left:73px;top:676px;width:15px;background:#000"></div>
<div class="vl" style="left:74px;top:661px;height:15px;background:#fff"></div>
<div class="hl" style="left:74px;top:661px;width:13px;background:#fff"></div>
<div class="hl" style="left:73px;top:692px;width:15px;background:#000"></div>
<div class="vl" style="left:74px;top:677px;height:15px;background:#fff"></div>
<div class="hl" style="left:74px;top:677px;width:13px;background:#fff"></div>
<div class="vl" style="left:74px;top:693px;height:3px;background:#fff"></div>
<div class="a" style="left:78px;top:632px;width:6px;height:10px;background:#d4d0c8"></div>
<div class="a" style="left:79px;top:633px;border:4px solid transparent;border-left:5px solid #000;border-right:0"></div>
<div class="a" style="left:88px;top:613px;width:62px;height:15px;border-left:1px solid #fff;border-top:1px solid #fff;border-right:1px solid #716f64;overflow:hidden;text-align:center;font-family:'Liberation Sans',sans-serif;font-weight:bold;font-size:11px;line-height:12px;letter-spacing:-.2px;white-space:nowrap">HAWN_PI</div>
<div class="a" style="left:151px;top:613px;width:48px;height:15px;border-left:1px solid #fff;border-top:1px solid #fff;border-right:1px solid #716f64;overflow:hidden;text-align:center;font-family:'Liberation Sans',sans-serif;font-weight:bold;font-size:11px;line-height:12px;letter-spacing:-.2px;white-space:nowrap">OTHER</div>
<div class="a" style="left:200px;top:613px;width:76px;height:15px;border-left:1px solid #fff;border-top:1px solid #fff;border-right:1px solid #716f64;overflow:hidden;text-align:center;font-family:'Liberation Sans',sans-serif;font-weight:bold;font-size:11px;line-height:12px;letter-spacing:-.2px;white-space:nowrap">MULT_RACE</div>
<div class="a" style="left:277px;top:613px;width:69px;height:15px;border-left:1px solid #fff;border-top:1px solid #fff;border-right:1px solid #716f64;overflow:hidden;text-align:center;font-family:'Liberation Sans',sans-serif;font-weight:bold;font-size:11px;line-height:12px;letter-spacing:-.2px;white-space:nowrap">HISPANIC</div>
<div class="a" style="left:347px;top:613px;width:48px;height:15px;border-left:1px solid #fff;border-top:1px solid #fff;border-right:1px solid #716f64;overflow:hidden;text-align:center;font-family:'Liberation Sans',sans-serif;font-weight:bold;font-size:11px;line-height:12px;letter-spacing:-.2px;white-space:nowrap">MALES</div>
<div class="a" style="left:396px;top:613px;width:62px;height:15px;border-left:1px solid #fff;border-top:1px solid #fff;border-right:1px solid #716f64;overflow:hidden;text-align:center;font-family:'Liberation Sans',sans-serif;font-weight:bold;font-size:11px;line-height:12px;letter-spacing:-.2px;white-space:nowrap">FEMALES</div>
<div class="a" style="left:459px;top:613px;width:83px;height:15px;border-left:1px solid #fff;border-top:1px solid #fff;border-right:1px solid #716f64;overflow:hidden;text-align:center;font-family:'Liberation Sans',sans-serif;font-weight:bold;font-size:11px;line-height:12px;letter-spacing:-.2px;white-space:nowrap">AGE_UNDER5</div>
<div class="a" style="left:543px;top:613px;width:70px;height:15px;border-left:1px solid #fff;border-top:1px solid #fff;border-right:1px solid #716f64;overflow:hidden;text-align:center;font-family:'Liberation Sans',sans-serif;font-weight:bold;font-size:11px;line-height:12px;letter-spacing:-.2px;white-space:nowrap">AGE_5_17</div>
<div class="a" style="left:614px;top:613px;width:75px;height:15px;border-left:1px solid #fff;border-top:1px solid #fff;border-right:1px solid #716f64;overflow:hidden;text-align:center;font-family:'Liberation Sans',sans-serif;font-weight:bold;font-size:11px;line-height:12px;letter-spacing:-.2px;white-space:nowrap">AGE_18_21</div>
<div class="a" style="left:690px;top:613px;width:76px;height:15px;border-left:1px solid #fff;border-top:1px solid #fff;border-right:1px solid #716f64;overflow:hidden;text-align:center;font-family:'Liberation Sans',sans-serif;font-weight:bold;font-size:11px;line-height:12px;letter-spacing:-.2px;white-space:nowrap">AGE_22_29</div>
<div class="a" style="left:767px;top:613px;width:76px;height:15px;border-left:1px solid #fff;border-top:1px solid #fff;border-right:1px solid #716f64;overflow:hidden;text-align:center;font-family:'Liberation Sans',sans-serif;font-weight:bold;font-size:11px;line-height:12px;letter-spacing:-.2px;white-space:nowrap">AGE_30_39</div>
<div class="a" style="left:844px;top:613px;width:68px;height:15px;border-left:1px solid #fff;border-top:1px solid #fff;border-right:1px solid #716f64;overflow:hidden;text-align:center;font-family:'Liberation Sans',sans-serif;font-weight:bold;font-size:11px;line-height:12px;letter-spacing:-.2px;white-space:nowrap">AGE_40_49</div>
<div class="hl" style="left:88px;top:644px;width:824px;background:#aca899"></div>
<div class="a" style="left:88px;top:629px;width:62px;height:15px;text-align:right;padding-right:4px;font-family:'Liberation Sans',sans-serif;font-size:11.5px;line-height:16px;letter-spacing:-.6px;overflow:hidden">5</div>
<div class="a" style="left:151px;top:629px;width:48px;height:15px;text-align:right;padding-right:4px;font-family:'Liberation Sans',sans-serif;font-size:11.5px;line-height:16px;letter-spacing:-.6px;overflow:hidden">19</div>
<div class="a" style="left:200px;top:629px;width:76px;height:15px;text-align:right;padding-right:4px;font-family:'Liberation Sans',sans-serif;font-size:11.5px;line-height:16px;letter-spacing:-.6px;overflow:hidden">66</div>
<div class="a" style="left:277px;top:629px;width:69px;height:15px;text-align:right;padding-right:4px;font-family:'Liberation Sans',sans-serif;font-size:11.5px;line-height:16px;letter-spacing:-.6px;overflow:hidden">97</div>
<div class="a" style="left:347px;top:629px;width:48px;height:15px;text-align:right;padding-right:4px;font-family:'Liberation Sans',sans-serif;font-size:11.5px;line-height:16px;letter-spacing:-.6px;overflow:hidden">1261</div>
<div class="a" style="left:396px;top:629px;width:62px;height:15px;text-align:right;padding-right:4px;font-family:'Liberation Sans',sans-serif;font-size:11.5px;line-height:16px;letter-spacing:-.6px;overflow:hidden">1237</div>
<div class="a" style="left:459px;top:629px;width:83px;height:15px;text-align:right;padding-right:4px;font-family:'Liberation Sans',sans-serif;font-size:11.5px;line-height:16px;letter-spacing:-.6px;overflow:hidden">104</div>
<div class="a" style="left:543px;top:629px;width:70px;height:15px;text-align:right;padding-right:4px;font-family:'Liberation Sans',sans-serif;font-size:11.5px;line-height:16px;letter-spacing:-.6px;overflow:hidden">213</div>
<div class="a" style="left:614px;top:629px;width:75px;height:15px;text-align:right;padding-right:4px;font-family:'Liberation Sans',sans-serif;font-size:11.5px;line-height:16px;letter-spacing:-.6px;overflow:hidden">46</div>
<div class="a" style="left:690px;top:629px;width:76px;height:15px;text-align:right;padding-right:4px;font-family:'Liberation Sans',sans-serif;font-size:11.5px;line-height:16px;letter-spacing:-.6px;overflow:hidden">140</div>
<div class="a" style="left:767px;top:629px;width:76px;height:15px;text-align:right;padding-right:4px;font-family:'Liberation Sans',sans-serif;font-size:11.5px;line-height:16px;letter-spacing:-.6px;overflow:hidden">359</div>
<div class="a" style="left:844px;top:629px;width:68px;height:15px;text-align:right;padding-right:1px;font-family:'Liberation Sans',sans-serif;font-size:11.5px;line-height:16px;letter-spacing:-.6px;overflow:hidden">47</div>
<div class="hl" style="left:88px;top:660px;width:824px;background:#aca899"></div>
<div class="a" style="left:88px;top:645px;width:62px;height:15px;text-align:right;padding-right:4px;font-family:'Liberation Sans',sans-serif;font-size:11.5px;line-height:16px;letter-spacing:-.6px;overflow:hidden">0</div>
<div class="a" style="left:151px;top:645px;width:48px;height:15px;text-align:right;padding-right:4px;font-family:'Liberation Sans',sans-serif;font-size:11.5px;line-height:16px;letter-spacing:-.6px;overflow:hidden">17</div>
<div class="a" style="left:200px;top:645px;width:76px;height:15px;text-align:right;padding-right:4px;font-family:'Liberation Sans',sans-serif;font-size:11.5px;line-height:16px;letter-spacing:-.6px;overflow:hidden">36</div>
<div class="a" style="left:277px;top:645px;width:69px;height:15px;text-align:right;padding-right:4px;font-family:'Liberation Sans',sans-serif;font-size:11.5px;line-height:16px;letter-spacing:-.6px;overflow:hidden">62</div>
<div class="a" style="left:347px;top:645px;width:48px;height:15px;text-align:right;padding-right:4px;font-family:'Liberation Sans',sans-serif;font-size:11.5px;line-height:16px;letter-spacing:-.6px;overflow:hidden">461</div>
<div class="a" style="left:396px;top:645px;width:62px;height:15px;text-align:right;padding-right:4px;font-family:'Liberation Sans',sans-serif;font-size:11.5px;line-height:16px;letter-spacing:-.6px;overflow:hidden">433</div>
<div class="a" style="left:459px;top:645px;width:83px;height:15px;text-align:right;padding-right:4px;font-family:'Liberation Sans',sans-serif;font-size:11.5px;line-height:16px;letter-spacing:-.6px;overflow:hidden">36</div>
<div class="a" style="left:543px;top:645px;width:70px;height:15px;text-align:right;padding-right:4px;font-family:'Liberation Sans',sans-serif;font-size:11.5px;line-height:16px;letter-spacing:-.6px;overflow:hidden">61</div>
<div class="a" style="left:614px;top:645px;width:75px;height:15px;text-align:right;padding-right:4px;font-family:'Liberation Sans',sans-serif;font-size:11.5px;line-height:16px;letter-spacing:-.6px;overflow:hidden">26</div>
<div class="a" style="left:690px;top:645px;width:76px;height:15px;text-align:right;padding-right:4px;font-family:'Liberation Sans',sans-serif;font-size:11.5px;line-height:16px;letter-spacing:-.6px;overflow:hidden">183</div>
<div class="a" style="left:767px;top:645px;width:76px;height:15px;text-align:right;padding-right:4px;font-family:'Liberation Sans',sans-serif;font-size:11.5px;line-height:16px;letter-spacing:-.6px;overflow:hidden">223</div>
<div class="a" style="left:844px;top:645px;width:68px;height:15px;text-align:right;padding-right:1px;font-family:'Liberation Sans',sans-serif;font-size:11.5px;line-height:16px;letter-spacing:-.6px;overflow:hidden">10</div>
<div class="hl" style="left:88px;top:676px;width:824px;background:#aca899"></div>
<div class="a" style="left:88px;top:661px;width:62px;height:15px;text-align:right;padding-right:4px;font-family:'Liberation Sans',sans-serif;font-size:11.5px;line-height:16px;letter-spacing:-.6px;overflow:hidden">5</div>
<div class="a" style="left:151px;top:661px;width:48px;height:15px;text-align:right;padding-right:4px;font-family:'Liberation Sans',sans-serif;font-size:11.5px;line-height:16px;letter-spacing:-.6px;overflow:hidden">19</div>
<div class="a" style="left:200px;top:661px;width:76px;height:15px;text-align:right;padding-right:4px;font-family:'Liberation Sans',sans-serif;font-size:11.5px;line-height:16px;letter-spacing:-.6px;overflow:hidden">66</div>
<div class="a" style="left:277px;top:661px;width:69px;height:15px;text-align:right;padding-right:4px;font-family:'Liberation Sans',sans-serif;font-size:11.5px;line-height:16px;letter-spacing:-.6px;overflow:hidden">97</div>
<div class="a" style="left:347px;top:661px;width:48px;height:15px;text-align:right;padding-right:4px;font-family:'Liberation Sans',sans-serif;font-size:11.5px;line-height:16px;letter-spacing:-.6px;overflow:hidden">1261</div>
<div class="a" style="left:396px;top:661px;width:62px;height:15px;text-align:right;padding-right:4px;font-family:'Liberation Sans',sans-serif;font-size:11.5px;line-height:16px;letter-spacing:-.6px;overflow:hidden">1237</div>
<div class="a" style="left:459px;top:661px;width:83px;height:15px;text-align:right;padding-right:4px;font-family:'Liberation Sans',sans-serif;font-size:11.5px;line-height:16px;letter-spacing:-.6px;overflow:hidden">104</div>
<div class="a" style="left:543px;top:661px;width:70px;height:15px;text-align:right;padding-right:4px;font-family:'Liberation Sans',sans-serif;font-size:11.5px;line-height:16px;letter-spacing:-.6px;overflow:hidden">213</div>
<div class="a" style="left:614px;top:661px;width:75px;height:15px;text-align:right;padding-right:4px;font-family:'Liberation Sans',sans-serif;font-size:11.5px;line-height:16px;letter-spacing:-.6px;overflow:hidden">46</div>
<div class="a" style="left:690px;top:661px;width:76px;height:15px;text-align:right;padding-right:4px;font-family:'Liberation Sans',sans-serif;font-size:11.5px;line-height:16px;letter-spacing:-.6px;overflow:hidden">140</div>
<div class="a" style="left:767px;top:661px;width:76px;height:15px;text-align:right;padding-right:4px;font-family:'Liberation Sans',sans-serif;font-size:11.5px;line-height:16px;letter-spacing:-.6px;overflow:hidden">359</div>
<div class="a" style="left:844px;top:661px;width:68px;height:15px;text-align:right;padding-right:1px;font-family:'Liberation Sans',sans-serif;font-size:11.5px;line-height:16px;letter-spacing:-.6px;overflow:hidden">47</div>
<div class="hl" style="left:88px;top:692px;width:824px;background:#aca899"></div>
<div class="a" style="left:88px;top:677px;width:62px;height:15px;text-align:right;padding-right:4px;font-family:'Liberation Sans',sans-serif;font-size:11.5px;line-height:16px;letter-spacing:-.6px;overflow:hidden">0</div>
<div class="a" style="left:151px;top:677px;width:48px;height:15px;text-align:right;padding-right:4px;font-family:'Liberation Sans',sans-serif;font-size:11.5px;line-height:16px;letter-spacing:-.6px;overflow:hidden">17</div>
<div class="a" style="left:200px;top:677px;width:76px;height:15px;text-align:right;padding-right:4px;font-family:'Liberation Sans',sans-serif;font-size:11.5px;line-height:16px;letter-spacing:-.6px;overflow:hidden">36</div>
<div class="a" style="left:277px;top:677px;width:69px;height:15px;text-align:right;padding-right:4px;font-family:'Liberation Sans',sans-serif;font-size:11.5px;line-height:16px;letter-spacing:-.6px;overflow:hidden">62</div>
<div class="a" style="left:347px;top:677px;width:48px;height:15px;text-align:right;padding-right:4px;font-family:'Liberation Sans',sans-serif;font-size:11.5px;line-height:16px;letter-spacing:-.6px;overflow:hidden">461</div>
<div class="a" style="left:396px;top:677px;width:62px;height:15px;text-align:right;padding-right:4px;font-family:'Liberation Sans',sans-serif;font-size:11.5px;line-height:16px;letter-spacing:-.6px;overflow:hidden">433</div>
<div class="a" style="left:459px;top:677px;width:83px;height:15px;text-align:right;padding-right:4px;font-family:'Liberation Sans',sans-serif;font-size:11.5px;line-height:16px;letter-spacing:-.6px;overflow:hidden">36</div>
<div class="a" style="left:543px;top:677px;width:70px;height:15px;text-align:right;padding-right:4px;font-family:'Liberation Sans',sans-serif;font-size:11.5px;line-height:16px;letter-spacing:-.6px;overflow:hidden">61</div>
<div class="a" style="left:614px;top:677px;width:75px;height:15px;text-align:right;padding-right:4px;font-family:'Liberation Sans',sans-serif;font-size:11.5px;line-height:16px;letter-spacing:-.6px;overflow:hidden">26</div>
<div class="a" style="left:690px;top:677px;width:76px;height:15px;text-align:right;padding-right:4px;font-family:'Liberation Sans',sans-serif;font-size:11.5px;line-height:16px;letter-spacing:-.6px;overflow:hidden">183</div>
<div class="a" style="left:767px;top:677px;width:76px;height:15px;text-align:right;padding-right:4px;font-family:'Liberation Sans',sans-serif;font-size:11.5px;line-height:16px;letter-spacing:-.6px;overflow:hidden">223</div>
<div class="a" style="left:844px;top:677px;width:68px;height:15px;text-align:right;padding-right:1px;font-family:'Liberation Sans',sans-serif;font-size:11.5px;line-height:16px;letter-spacing:-.6px;overflow:hidden">10</div>
<div class="vl" style="left:150px;top:629px;height:67px;background:#aca899"></div>
<div class="vl" style="left:150px;top:613px;height:15px;background:#000"></div>
<div class="vl" style="left:199px;top:629px;height:67px;background:#aca899"></div>
<div class="vl" style="left:199px;top:613px;height:15px;background:#000"></div>
<div class="vl" style="left:276px;top:629px;height:67px;background:#aca899"></div>
<div class="vl" style="left:276px;top:613px;height:15px;background:#000"></div>
<div class="vl" style="left:346px;top:629px;height:67px;background:#aca899"></div>
<div class="vl" style="left:346px;top:613px;height:15px;background:#000"></div>
<div class="vl" style="left:395px;top:629px;height:67px;background:#aca899"></div>
<div class="vl" style="left:395px;top:613px;height:15px;background:#000"></div>
<div class="vl" style="left:458px;top:629px;height:67px;background:#aca899"></div>
<div class="vl" style="left:458px;top:613px;height:15px;background:#000"></div>
<div class="vl" style="left:542px;top:629px;height:67px;background:#aca899"></div>
<div class="vl" style="left:542px;top:613px;height:15px;background:#000"></div>
<div class="vl" style="left:613px;top:629px;height:67px;background:#aca899"></div>
<div class="vl" style="left:613px;top:613px;height:15px;background:#000"></div>
<div class="vl" style="left:689px;top:629px;height:67px;background:#aca899"></div>
<div class="vl" style="left:689px;top:613px;height:15px;background:#000"></div>
<div class="vl" style="left:766px;top:629px;height:67px;background:#aca899"></div>
<div class="vl" style="left:766px;top:613px;height:15px;background:#000"></div>
<div class="vl" style="left:843px;top:629px;height:67px;background:#aca899"></div>
<div class="vl" style="left:843px;top:613px;height:15px;background:#000"></div>
<div class="a" style="left:912px;top:611px;width:17px;height:85px;background:linear-gradient(90deg,#f3f1ec,#fefefb)"></div>
<div class="a" style="left:912px;top:612px;width:17px;height:17px;border:1px solid #fff;border-radius:2px;background:linear-gradient(135deg,#cfdcfd,#b9cbf8);box-shadow:inset 0 0 0 1px #b4c8f6"></div>
<svg style="left:916px;top:617px" width="9" height="8" viewBox="0 0 9 8"><path d="M1 6 L4.5 2 L8 6" fill="none" stroke="#4d6185" stroke-width="2"/></svg>
<div class="a" style="left:912px;top:629px;width:17px;height:8px;border:1px solid #fff;border-radius:2px;background:linear-gradient(135deg,#cfdcfd,#b9cbf8);box-shadow:inset 0 0 0 1px #b4c8f6"></div>
<div class="a" style="left:912px;top:679px;width:17px;height:17px;border:1px solid #fff;border-radius:2px;background:linear-gradient(135deg,#cfdcfd,#b9cbf8);box-shadow:inset 0 0 0 1px #b4c8f6"></div>
<svg style="left:916px;top:684px" width="9" height="8" viewBox="0 0 9 8"><path d="M1 2 L4.5 6 L8 2" fill="none" stroke="#4d6185" stroke-width="2"/></svg>
<div class="a" style="left:73px;top:696px;width:856px;height:17px;background:linear-gradient(#f3f1ec,#fefefb)"></div>
<div class="a" style="left:911px;top:696px;width:18px;height:17px;background:#ece9d8"></div>
<div class="a" style="left:73px;top:696px;width:17px;height:17px;border:1px solid #fff;border-radius:2px;background:linear-gradient(135deg,#cfdcfd,#b9cbf8);box-shadow:inset 0 0 0 1px #b4c8f6"></div>
<svg style="left:77px;top:700px" width="8" height="9" viewBox="0 0 8 9"><path d="M6 1 L2 4.5 L6 8" fill="none" stroke="#4d6185" stroke-width="2"/></svg>
<div class="a" style="left:894px;top:696px;width:17px;height:17px;border:1px solid #fff;border-radius:2px;background:linear-gradient(135deg,#cfdcfd,#b9cbf8);box-shadow:inset 0 0 0 1px #b4c8f6"></div>
<svg style="left:899px;top:700px" width="8" height="9" viewBox="0 0 8 9"><path d="M2 1 L6 4.5 L2 8" fill="none" stroke="#4d6185" stroke-width="2"/></svg>
<div class="a" style="left:616px;top:697px;width:92px;height:16px;border:1px solid #fff;border-radius:2px;background:linear-gradient(135deg,#cfdcfd,#b9cbf8);box-shadow:inset 0 0 0 1px #b4c8f6"></div>
<svg style="left:657px;top:701px" width="8" height="8" viewBox="0 0 8 8"><path d="M0.5 0 V7 M2.5 0 V7 M4.5 0 V7 M6.5 0 V7" stroke="#8ca0d8" stroke-width="1"/></svg>
<div class="m" style="left:108px;top:722px;letter-spacing:-.1px">Record:</div>
<div class="a" style="left:149px;top:719px;width:17px;height:17px;border:1px solid #fff;border-right-color:#716f64;border-bottom:0"></div>
<svg style="left:153px;top:724px" width="8" height="8" viewBox="0 0 8 8"><path d="M1 0 V7" stroke="#000" stroke-width="1.6"/><path d="M7 0 L3 3.5 L7 7Z" fill="#000"/></svg>
<div class="a" style="left:167px;top:719px;width:16px;height:17px;border:1px solid #fff;border-right-color:#716f64;border-bottom:0"></div>
<svg style="left:172px;top:724px" width="8" height="8" viewBox="0 0 8 8"><path d="M5 0 L1 3.5 L5 7Z" fill="#000"/></svg>
<div class="a" style="left:185px;top:719px;width:61px;height:17px;border:1px solid #716f64;border-bottom:0;background:#fff;box-shadow:-1px -1px 0 #aca899"></div>
<div class="m" style="left:230px;top:722px;font-family:'Liberation Sans',sans-serif">1</div>
<div class="a" style="left:247px;top:719px;width:16px;height:17px;border:1px solid #fff;border-right-color:#716f64;border-bottom:0"></div>
<svg style="left:252px;top:724px" width="8" height="8" viewBox="0 0 8 8"><path d="M1 0 L5 3.5 L1 7Z" fill="#000"/></svg>
<div class="a" style="left:263px;top:719px;width:17px;height:17px;border:1px solid #fff;border-right-color:#716f64;border-bottom:0"></div>
<svg style="left:267px;top:724px" width="8" height="8" viewBox="0 0 8 8"><path d="M7 0 V7" stroke="#000" stroke-width="1.6"/><path d="M1 0 L5 3.5 L1 7Z" fill="#000"/></svg>
<div class="m" style="left:309px;top:722px;letter-spacing:-.1px">Show:</div>
<div class="a" style="left:343px;top:718px;width:27px;height:17px;border:1px solid #716f64;border-right-color:#fff;border-bottom:0;background:#f6f4ec"></div>
<div class="m" style="left:350px;top:722px">All</div>
<div class="a" style="left:370px;top:718px;width:56px;height:17px;border:1px solid #fff;border-right-color:#716f64;border-bottom:0"></div>
<div class="m" style="left:376px;top:722px">Selected</div>
<div class="m" style="left:453px;top:722px;letter-spacing:-.1px">Records (0 out of 6279 Selected)</div>
<div class="a" style="left:647px;top:718px;width:78px;height:17px;border:1px solid #fff;border-right-color:#716f64;border-bottom:0"></div>
<div class="m" style="left:666px;top:722px;letter-spacing:-.1px">Options</div>
<div class="a" style="left:713px;top:726px;border:3px solid transparent;border-top:4px solid #000;border-bottom:0"></div>
<div class="a" style="left:65px;top:734px;width:871px;height:4px;background:#3a80f0"></div>

</body></html>
